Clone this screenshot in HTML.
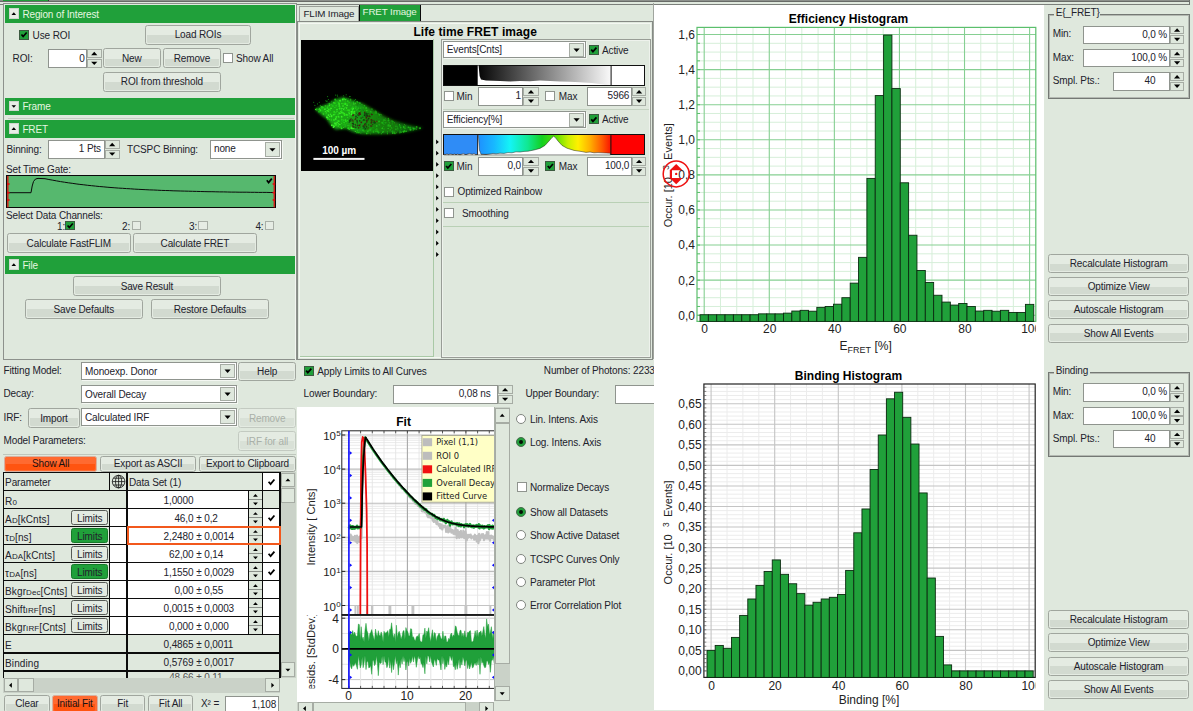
<!DOCTYPE html><html><head><meta charset="utf-8"><title>FRET</title><style>
html,body{margin:0;padding:0;background:#dfe8dd;}
#root{position:relative;width:1193px;height:711px;overflow:hidden;background:#dfe8dd;font:10px "Liberation Sans",sans-serif;letter-spacing:-0.13px;color:#22222c;}
#root div{position:absolute;box-sizing:content-box;white-space:nowrap;}
#root .ov{position:absolute;left:0;top:0;pointer-events:none;letter-spacing:0;}
#root .t{line-height:14px;height:14px;}
#root .btn{box-sizing:border-box;border:1px solid #a0a69e;border-radius:2.6px;background:#e4ebe2;text-align:center;overflow:hidden;}
#root .btn i{position:absolute;left:1.2px;right:1.2px;top:52%;bottom:1.2px;background:#d2dad0;border-radius:0 0 1.5px 1.5px;}
#root .btn span{position:relative;}
#root .btn.dis{color:#a9b0a8;border-color:#c3cac1;}
#root .btn.dis i{background:#d9e1d7;}
#root .btn.org{background:#ff6a30;border-color:#d8b0a0;color:#1a1010;}
#root .btn.org i{background:#ff5410;}
#root .btn.lim{border-color:#555a55;border-radius:2.5px;background:#e3eae1;}
#root .btn.lim i{display:none;}
#root .btn.lim span{top:0.6px;}
#root .btn.grn{background:#20a03a;border-color:#157a28;}
#root .inp{box-sizing:border-box;background:#fff;border:1px solid #8f948e;text-align:right;overflow:hidden;}
#root .cmb{box-sizing:border-box;background:#fff;border:1px solid #8f948e;padding-left:3px;overflow:hidden;box-shadow:1px 1px 0 #f4f7f2;}
#root .sb{box-sizing:border-box;background:#dfe8dd;border:1px solid #a6aca4;}
#root .ck{box-sizing:border-box;background:#fff;border:1px solid #8f948e;}
#root .ckg{box-sizing:border-box;background:#20a03a;border:1px solid #3c5a40;}
#root .rd{box-sizing:border-box;background:#fff;border:1px solid #80857f;border-radius:50%;}
#root .rdo{background:#041004;border-radius:50%;}
#root .cell{overflow:hidden;box-sizing:border-box;}
#root .sub{font-size:8px;position:relative;top:0.5px;}
#root .lbl{overflow:hidden;}
</style></head><body><div id="root"><div class="" style="left:0.00px;top:0.00px;width:1193.00px;height:5.20px;background:#dfe8dd;"></div><div class="" style="left:0.00px;top:0.00px;width:1190.40px;height:0.90px;background:#8c908b;"></div><div class="" style="left:3.00px;top:0.00px;width:45.50px;height:0.90px;background:#20a03a;"></div><div class="" style="left:48.30px;top:0.00px;width:1.00px;height:1.00px;background:#333;"></div><div class="" style="left:0.00px;top:0.80px;width:1190.40px;height:0.90px;background:#686b67;"></div><div class="" style="left:0.00px;top:3.70px;width:1190.40px;height:1.30px;background:#7b7f7a;"></div><div class="" style="left:1189.40px;top:0.00px;width:1.00px;height:5.00px;background:#6e726d;"></div><div class="" style="left:3.00px;top:3.40px;width:294.30px;height:357.00px;border:1.3px solid #8d918c;box-sizing:border-box;background:#dfe8dd;"></div><div class="" style="left:295.20px;top:4.50px;width:1.20px;height:355.00px;background:#f2f5f0;"></div><div class="" style="left:4.60px;top:5.00px;width:290.40px;height:18.00px;background:#20a03a;"></div><div class="" style="left:8.80px;top:8.40px;width:10.00px;height:10.40px;background:#e8ede6;border:1px solid #cfd6cd;box-sizing:border-box;"></div><div class="t" style="left:22.40px;top:7.95px;color:#e6f7e0;">Region of Interest</div><div class="ckg" style="left:19.00px;top:29.60px;width:10.10px;height:10.10px;"></div><div class="t" style="left:32.60px;top:28.55px;">Use ROI</div><div class="btn" style="left:145.00px;top:25.00px;width:105.90px;height:19.80px;line-height:18.80px;"><i></i><span>Load ROIs</span></div><div class="t" style="left:12.60px;top:51.55px;">ROI:</div><div class="inp" style="left:48.20px;top:48.80px;width:38.70px;height:19.20px;line-height:17.2px;padding-right:1.2px;">0</div><div class="sb" style="left:86.90px;top:48.80px;width:14.70px;height:9.20px;"></div><div class="sb" style="left:86.90px;top:58.80px;width:14.70px;height:9.20px;"></div><div class="btn" style="left:102.90px;top:48.30px;width:57.90px;height:20.00px;line-height:19.00px;"><i></i><span>New</span></div><div class="btn" style="left:163.00px;top:48.30px;width:57.90px;height:20.00px;line-height:19.00px;"><i></i><span>Remove</span></div><div class="ck" style="left:222.80px;top:52.60px;width:10.10px;height:10.10px;"></div><div class="t" style="left:236.00px;top:51.55px;">Show All</div><div class="btn" style="left:102.90px;top:71.80px;width:118.00px;height:19.90px;line-height:18.90px;"><i></i><span>ROI from threshold</span></div><div class="" style="left:4.60px;top:97.50px;width:290.40px;height:17.90px;background:#20a03a;"></div><div class="" style="left:8.80px;top:100.90px;width:10.00px;height:10.40px;background:#e8ede6;border:1px solid #cfd6cd;box-sizing:border-box;"></div><div class="t" style="left:22.40px;top:100.40px;color:#e6f7e0;">Frame</div><div class="" style="left:8.00px;top:118.00px;width:286.00px;height:1.00px;background:#c3ccc1;"></div><div class="" style="left:4.60px;top:120.00px;width:290.40px;height:17.80px;background:#20a03a;"></div><div class="" style="left:8.80px;top:123.40px;width:10.00px;height:10.40px;background:#e8ede6;border:1px solid #cfd6cd;box-sizing:border-box;"></div><div class="t" style="left:22.40px;top:122.85px;color:#e6f7e0;">FRET</div><div class="t" style="left:6.50px;top:142.55px;">Binning:</div><div class="inp" style="left:48.20px;top:140.00px;width:56.40px;height:18.60px;line-height:16.6px;padding-right:2.6px;">1 Pts</div><div class="sb" style="left:104.60px;top:140.00px;width:15.20px;height:8.90px;"></div><div class="sb" style="left:104.60px;top:149.70px;width:15.20px;height:8.90px;"></div><div class="t" style="left:127.00px;top:142.55px;">TCSPC Binning:</div><div class="cmb" style="left:210.00px;top:140.30px;width:71.60px;height:18.30px;line-height:15.9px;">none</div><div class="sb" style="left:265.10px;top:141.80px;width:14.70px;height:15.30px;"></div><div class="t" style="left:6.00px;top:162.55px;">Set Time Gate:</div><div class="" style="left:6.30px;top:175.00px;width:269.60px;height:33.40px;background:#56b86e;border:1px solid #0a0a0a;box-sizing:border-box;"></div><div class="t" style="left:6.00px;top:208.55px;">Select Data Channels:</div><div class="t" style="left:57.00px;top:219.55px;">1:</div><div class="ckg" style="left:65.30px;top:220.70px;width:9.80px;height:9.80px;"></div><div class="t" style="left:122.00px;top:219.55px;">2:</div><div class="ck" style="left:131.60px;top:220.70px;width:9.80px;height:9.80px;background:#e6ece4;border-color:#a9afa7;"></div><div class="t" style="left:189.00px;top:219.55px;">3:</div><div class="ck" style="left:198.00px;top:220.70px;width:9.80px;height:9.80px;background:#e6ece4;border-color:#a9afa7;"></div><div class="t" style="left:255.40px;top:219.55px;">4:</div><div class="ck" style="left:264.60px;top:220.70px;width:9.80px;height:9.80px;background:#e6ece4;border-color:#a9afa7;"></div><div class="btn" style="left:6.80px;top:232.90px;width:124.00px;height:20.10px;line-height:19.10px;"><i></i><span>Calculate FastFLIM</span></div><div class="btn" style="left:132.90px;top:232.90px;width:124.20px;height:20.10px;line-height:19.10px;"><i></i><span>Calculate FRET</span></div><div class="" style="left:4.60px;top:256.00px;width:290.40px;height:18.00px;background:#20a03a;"></div><div class="" style="left:8.80px;top:259.40px;width:10.00px;height:10.40px;background:#e8ede6;border:1px solid #cfd6cd;box-sizing:border-box;"></div><div class="t" style="left:22.40px;top:258.95px;color:#e6f7e0;">File</div><div class="btn" style="left:72.90px;top:275.70px;width:148.00px;height:20.30px;line-height:19.30px;"><i></i><span>Save Result</span></div><div class="btn" style="left:24.80px;top:298.70px;width:118.10px;height:20.10px;line-height:19.10px;"><i></i><span>Save Defaults</span></div><div class="btn" style="left:150.90px;top:298.70px;width:117.90px;height:20.10px;line-height:19.10px;"><i></i><span>Restore Defaults</span></div><div class="t" style="left:3.50px;top:363.75px;">Fitting Model:</div><div class="cmb" style="left:81.00px;top:362.00px;width:155.80px;height:17.70px;line-height:17.1px;">Monoexp. Donor</div><div class="sb" style="left:220.30px;top:363.50px;width:14.70px;height:14.70px;"></div><div class="btn" style="left:238.20px;top:361.50px;width:57.90px;height:19.30px;line-height:18.30px;"><i></i><span>Help</span></div><div class="t" style="left:3.50px;top:387.35px;">Decay:</div><div class="cmb" style="left:81.00px;top:385.00px;width:155.80px;height:17.70px;line-height:17.1px;">Overall Decay</div><div class="sb" style="left:220.30px;top:386.50px;width:14.70px;height:14.70px;"></div><div class="t" style="left:3.50px;top:410.55px;">IRF:</div><div class="btn" style="left:28.10px;top:407.50px;width:51.80px;height:20.40px;line-height:19.40px;"><i></i><span>Import</span></div><div class="cmb" style="left:81.00px;top:408.00px;width:155.80px;height:17.70px;line-height:17.1px;">Calculated IRF</div><div class="sb" style="left:220.30px;top:409.50px;width:14.70px;height:14.70px;"></div><div class="btn dis" style="left:238.20px;top:407.50px;width:57.90px;height:20.40px;line-height:19.40px;"><i></i><span>Remove</span></div><div class="t" style="left:3.50px;top:433.65px;">Model Parameters:</div><div class="btn dis" style="left:238.20px;top:431.00px;width:57.90px;height:20.00px;line-height:19.00px;"><i></i><span>IRF for all</span></div><div class="" style="left:3.00px;top:454.30px;width:293.00px;height:1.00px;background:#bfc7bd;"></div><div class="btn org" style="left:4.00px;top:456.30px;width:93.30px;height:15.50px;line-height:14.50px;"><i></i><span>Show All</span></div><div class="btn" style="left:100.00px;top:456.30px;width:96.30px;height:15.50px;line-height:14.50px;"><i></i><span>Export as ASCII</span></div><div class="btn" style="left:199.20px;top:456.30px;width:96.60px;height:15.50px;line-height:14.50px;"><i></i><span>Export to Clipboard</span></div><div class="" style="left:3.10px;top:472.00px;width:277.60px;height:205.80px;background:#0c0c0c;"></div><div class="cell" style="left:4.10px;top:473.30px;width:104.80px;height:16.62px;background:#dfe8dd;line-height:16.6px;padding-left:1px;padding-top:1.6px;">Parameter</div><div class="cell" style="left:110.30px;top:473.30px;width:16.20px;height:16.62px;background:#dfe8dd;line-height:16.6px;"></div><div class="cell" style="left:127.90px;top:473.30px;width:134.00px;height:16.62px;background:#dfe8dd;line-height:16.6px;padding-left:1px;padding-top:1.6px;">Data Set (1)</div><div class="cell" style="left:263.30px;top:473.30px;width:16.20px;height:16.62px;background:#fff;line-height:16.6px;"></div><div class="cell" style="left:4.10px;top:491.32px;width:122.40px;height:16.62px;background:#dfe8dd;line-height:16.6px;padding-left:1px;padding-top:2.4px;letter-spacing:0.1px;">R<span class="sub">0</span></div><div class="cell" style="left:127.90px;top:491.32px;width:119.70px;height:16.62px;background:#fff;line-height:16.6px;padding-top:1.9px;"><span style="position:absolute;right:calc(100% - 65.5px)">1,0000</span></div><div class="cell" style="left:249.00px;top:491.32px;width:12.90px;height:16.62px;background:#dfe8dd;line-height:16.6px;"></div><div class="" style="left:248.90px;top:499.13px;width:13.10px;height:1.00px;background:#8b908a;"></div><div class="cell" style="left:263.30px;top:491.32px;width:16.20px;height:16.62px;background:#dfe8dd;line-height:16.6px;"></div><div class="cell" style="left:4.10px;top:509.34px;width:104.80px;height:16.62px;background:#dfe8dd;line-height:16.6px;padding-left:1px;padding-top:2.4px;letter-spacing:0.1px;">A<span class="sub">D</span>[kCnts]</div><div class="cell" style="left:110.30px;top:509.34px;width:16.20px;height:16.62px;background:#fff;line-height:16.6px;"></div><div class="btn lim" style="left:71.30px;top:510.04px;width:36.90px;height:14.72px;line-height:13.72px;"><i></i><span>Limits</span></div><div class="cell" style="left:127.90px;top:509.34px;width:119.70px;height:16.62px;background:#fff;line-height:16.6px;padding-top:1.9px;"><span style="position:absolute;right:calc(100% - 65.5px)">46,0</span><span style="position:absolute;left:68.3px">± 0,2</span></div><div class="cell" style="left:249.00px;top:509.34px;width:12.90px;height:16.62px;background:#dfe8dd;line-height:16.6px;"></div><div class="" style="left:248.90px;top:517.15px;width:13.10px;height:1.00px;background:#8b908a;"></div><div class="cell" style="left:263.30px;top:509.34px;width:16.20px;height:16.62px;background:#fff;line-height:16.6px;"></div><div class="cell" style="left:4.10px;top:527.36px;width:104.80px;height:16.62px;background:#dfe8dd;line-height:16.6px;padding-left:1px;padding-top:2.4px;letter-spacing:0.1px;">τ<span class="sub">D</span>[ns]</div><div class="cell" style="left:110.30px;top:527.36px;width:16.20px;height:16.62px;background:#fff;line-height:16.6px;"></div><div class="btn lim grn" style="left:71.30px;top:528.06px;width:36.90px;height:14.72px;line-height:13.72px;"><i></i><span>Limits</span></div><div class="cell" style="left:127.90px;top:527.36px;width:119.70px;height:16.62px;background:#fff;line-height:16.6px;padding-top:1.9px;"><span style="position:absolute;right:calc(100% - 65.5px)">2,2480</span><span style="position:absolute;left:68.3px">± 0,0014</span></div><div class="cell" style="left:249.00px;top:527.36px;width:12.90px;height:16.62px;background:#dfe8dd;line-height:16.6px;"></div><div class="" style="left:248.90px;top:535.17px;width:13.10px;height:1.00px;background:#8b908a;"></div><div class="cell" style="left:263.30px;top:527.36px;width:16.20px;height:16.62px;background:#fff;line-height:16.6px;"></div><div class="" style="left:126.90px;top:526.36px;width:153.70px;height:18.82px;border:2px solid #f2581c;box-sizing:border-box;"></div><div class="cell" style="left:4.10px;top:545.38px;width:104.80px;height:16.62px;background:#dfe8dd;line-height:16.6px;padding-left:1px;padding-top:2.4px;letter-spacing:0.1px;">A<span class="sub">DA</span>[kCnts]</div><div class="cell" style="left:110.30px;top:545.38px;width:16.20px;height:16.62px;background:#fff;line-height:16.6px;"></div><div class="btn lim" style="left:71.30px;top:546.08px;width:36.90px;height:14.72px;line-height:13.72px;"><i></i><span>Limits</span></div><div class="cell" style="left:127.90px;top:545.38px;width:119.70px;height:16.62px;background:#fff;line-height:16.6px;padding-top:1.9px;"><span style="position:absolute;right:calc(100% - 65.5px)">62,00</span><span style="position:absolute;left:68.3px">± 0,14</span></div><div class="cell" style="left:249.00px;top:545.38px;width:12.90px;height:16.62px;background:#dfe8dd;line-height:16.6px;"></div><div class="" style="left:248.90px;top:553.19px;width:13.10px;height:1.00px;background:#8b908a;"></div><div class="cell" style="left:263.30px;top:545.38px;width:16.20px;height:16.62px;background:#fff;line-height:16.6px;"></div><div class="cell" style="left:4.10px;top:563.40px;width:104.80px;height:16.62px;background:#dfe8dd;line-height:16.6px;padding-left:1px;padding-top:2.4px;letter-spacing:0.1px;">τ<span class="sub">DA</span>[ns]</div><div class="cell" style="left:110.30px;top:563.40px;width:16.20px;height:16.62px;background:#fff;line-height:16.6px;"></div><div class="btn lim grn" style="left:71.30px;top:564.10px;width:36.90px;height:14.72px;line-height:13.72px;"><i></i><span>Limits</span></div><div class="cell" style="left:127.90px;top:563.40px;width:119.70px;height:16.62px;background:#fff;line-height:16.6px;padding-top:1.9px;"><span style="position:absolute;right:calc(100% - 65.5px)">1,1550</span><span style="position:absolute;left:68.3px">± 0,0029</span></div><div class="cell" style="left:249.00px;top:563.40px;width:12.90px;height:16.62px;background:#dfe8dd;line-height:16.6px;"></div><div class="" style="left:248.90px;top:571.21px;width:13.10px;height:1.00px;background:#8b908a;"></div><div class="cell" style="left:263.30px;top:563.40px;width:16.20px;height:16.62px;background:#fff;line-height:16.6px;"></div><div class="cell" style="left:4.10px;top:581.42px;width:104.80px;height:16.62px;background:#dfe8dd;line-height:16.6px;padding-left:1px;padding-top:2.4px;letter-spacing:0.1px;">Bkgr<span class="sub">Dec</span>[Cnts]</div><div class="cell" style="left:110.30px;top:581.42px;width:16.20px;height:16.62px;background:#fff;line-height:16.6px;"></div><div class="btn lim" style="left:71.30px;top:582.12px;width:36.90px;height:14.72px;line-height:13.72px;"><i></i><span>Limits</span></div><div class="cell" style="left:127.90px;top:581.42px;width:119.70px;height:16.62px;background:#fff;line-height:16.6px;padding-top:1.9px;"><span style="position:absolute;right:calc(100% - 65.5px)">0,00</span><span style="position:absolute;left:68.3px">± 0,55</span></div><div class="cell" style="left:249.00px;top:581.42px;width:12.90px;height:16.62px;background:#dfe8dd;line-height:16.6px;"></div><div class="" style="left:248.90px;top:589.23px;width:13.10px;height:1.00px;background:#8b908a;"></div><div class="cell" style="left:263.30px;top:581.42px;width:16.20px;height:16.62px;background:#fff;line-height:16.6px;"></div><div class="cell" style="left:4.10px;top:599.44px;width:104.80px;height:16.62px;background:#dfe8dd;line-height:16.6px;padding-left:1px;padding-top:2.4px;letter-spacing:0.1px;">Shift<span class="sub">IRF</span>[ns]</div><div class="cell" style="left:110.30px;top:599.44px;width:16.20px;height:16.62px;background:#fff;line-height:16.6px;"></div><div class="btn lim" style="left:71.30px;top:600.14px;width:36.90px;height:14.72px;line-height:13.72px;"><i></i><span>Limits</span></div><div class="cell" style="left:127.90px;top:599.44px;width:119.70px;height:16.62px;background:#fff;line-height:16.6px;padding-top:1.9px;"><span style="position:absolute;right:calc(100% - 65.5px)">0,0015</span><span style="position:absolute;left:68.3px">± 0,0003</span></div><div class="cell" style="left:249.00px;top:599.44px;width:12.90px;height:16.62px;background:#dfe8dd;line-height:16.6px;"></div><div class="" style="left:248.90px;top:607.25px;width:13.10px;height:1.00px;background:#8b908a;"></div><div class="cell" style="left:263.30px;top:599.44px;width:16.20px;height:16.62px;background:#fff;line-height:16.6px;"></div><div class="cell" style="left:4.10px;top:617.46px;width:104.80px;height:16.62px;background:#dfe8dd;line-height:16.6px;padding-left:1px;padding-top:2.4px;letter-spacing:0.1px;">Bkgr<span class="sub">IRF</span>[Cnts]</div><div class="cell" style="left:110.30px;top:617.46px;width:16.20px;height:16.62px;background:#fff;line-height:16.6px;"></div><div class="btn lim" style="left:71.30px;top:618.16px;width:36.90px;height:14.72px;line-height:13.72px;"><i></i><span>Limits</span></div><div class="cell" style="left:127.90px;top:617.46px;width:119.70px;height:16.62px;background:#fff;line-height:16.6px;padding-top:1.9px;"><span style="position:absolute;right:calc(100% - 65.5px)">0,000</span><span style="position:absolute;left:68.3px">± 0,000</span></div><div class="cell" style="left:249.00px;top:617.46px;width:12.90px;height:16.62px;background:#dfe8dd;line-height:16.6px;"></div><div class="" style="left:248.90px;top:625.27px;width:13.10px;height:1.00px;background:#8b908a;"></div><div class="cell" style="left:263.30px;top:617.46px;width:16.20px;height:16.62px;background:#fff;line-height:16.6px;"></div><div class="cell" style="left:4.10px;top:635.48px;width:122.40px;height:16.62px;background:#dfe8dd;line-height:16.6px;padding-left:1px;padding-top:2.4px;letter-spacing:0.1px;">E</div><div class="cell" style="left:127.90px;top:635.48px;width:151.60px;height:16.62px;background:#dfe8dd;line-height:16.6px;padding-top:1.9px;"><span style="position:absolute;right:calc(100% - 65.5px)">0,4865</span><span style="position:absolute;left:68.3px">± 0,0011</span></div><div class="cell" style="left:4.10px;top:653.50px;width:122.40px;height:16.62px;background:#dfe8dd;line-height:16.6px;padding-left:1px;padding-top:2.4px;letter-spacing:0.1px;">Binding</div><div class="cell" style="left:127.90px;top:653.50px;width:151.60px;height:16.62px;background:#dfe8dd;line-height:16.6px;padding-top:1.9px;"><span style="position:absolute;right:calc(100% - 65.5px)">0,5769</span><span style="position:absolute;left:68.3px">± 0,0017</span></div><div class="cell" style="left:4.10px;top:671.52px;width:122.40px;height:6.58px;background:#dfe8dd;line-height:6.6px;"></div><div class="cell" style="left:127.90px;top:671.52px;width:151.60px;height:6.58px;background:#dfe8dd;line-height:6.6px;color:#555;"><span style="position:absolute;top:3px;left:0;right:0"><span style="position:absolute;right:calc(100% - 65.6px)">48,66</span><span style="position:absolute;left:68.4px">± 0,11</span></span></div><div class="" style="left:280.80px;top:472.00px;width:14.80px;height:205.80px;background:#cad2c8;"></div><div class="sb" style="left:280.60px;top:472.80px;width:14.60px;height:14.60px;"></div><div class="sb" style="left:280.60px;top:487.60px;width:14.60px;height:15.60px;"></div><div class="sb" style="left:280.60px;top:661.80px;width:14.60px;height:15.60px;"></div><div class="" style="left:3.40px;top:677.80px;width:277.00px;height:15.00px;background:#cad2c8;"></div><div class="sb" style="left:3.60px;top:678.00px;width:14.60px;height:14.40px;"></div><div class="sb" style="left:18.40px;top:678.00px;width:15.60px;height:14.40px;"></div><div class="sb" style="left:264.80px;top:678.00px;width:15.00px;height:14.40px;"></div><div class="" style="left:280.20px;top:677.80px;width:15.40px;height:15.00px;background:#dfe8dd;"></div><div class="btn" style="left:4.10px;top:695.00px;width:45.60px;height:17.80px;line-height:16.80px;"><i></i><span>Clear</span></div><div class="btn org" style="left:52.20px;top:695.00px;width:45.40px;height:17.80px;line-height:16.80px;"><i></i><span>Initial Fit</span></div><div class="btn" style="left:100.10px;top:695.00px;width:45.20px;height:17.80px;line-height:16.80px;"><i></i><span>Fit</span></div><div class="btn" style="left:148.20px;top:695.00px;width:44.80px;height:17.80px;line-height:16.80px;"><i></i><span>Fit All</span></div><div class="t" style="left:201.00px;top:697.35px;">X² =</div><div class="inp" style="left:224.60px;top:696.00px;width:54.60px;height:18.00px;line-height:15px;padding-right:2px;">1,108</div><div class="" style="left:296.50px;top:704.00px;width:1.20px;height:8.00px;background:#8d918c;"></div><div class="tab" style="left:299.30px;top:5.60px;width:59.30px;height:16.00px;background:#dfe8dd;border:1px solid #9aa098;border-bottom:none;box-sizing:border-box;line-height:13px;text-align:center;font-size:9.8px;">FLIM Image</div><div class="tab" style="left:358.60px;top:4.80px;width:62.00px;height:17.00px;background:#20a03a;border:1.2px solid #0a0a0a;border-top:none;border-bottom:none;box-sizing:border-box;line-height:14.6px;text-align:center;color:#e6f7e0;font-size:9.8px;">FRET Image</div><div class="" style="left:297.20px;top:21.20px;width:355.60px;height:338.60px;border:1.4px solid #868a85;box-sizing:border-box;background:#dfe8dd;"></div><div class="" style="left:298.60px;top:22.60px;width:352.80px;height:335.80px;border:1px solid #f4f7f2;box-sizing:border-box;"></div><div class="tt" style="left:300.20px;top:25.00px;width:350.00px;height:15.00px;text-align:center;font-weight:bold;font-size:12px;line-height:15px;color:#000;letter-spacing:0.08px;">Life time FRET image</div><div class="" style="left:300.00px;top:39.40px;width:133.60px;height:318.00px;border-right:1px solid #a9c9a6;border-bottom:1px solid #a9c9a6;box-sizing:border-box;"></div><div class="" style="left:300.60px;top:39.90px;width:132.00px;height:131.50px;background:#000;"></div><div class="" style="left:441.20px;top:39.20px;width:209.60px;height:318.40px;border:1px solid #989d96;box-sizing:border-box;"></div><div class="" style="left:442.20px;top:40.20px;width:207.60px;height:316.40px;border:1px solid #eef2ec;box-sizing:border-box;"></div><div class="cmb" style="left:442.80px;top:41.30px;width:143.00px;height:16.90px;line-height:16.3px;">Events[Cnts]</div><div class="sb" style="left:569.30px;top:42.80px;width:14.70px;height:13.90px;"></div><div class="ckg" style="left:588.80px;top:44.70px;width:10.10px;height:10.10px;"></div><div class="t" style="left:602.00px;top:43.65px;">Active</div><div class="" style="left:443.40px;top:64.60px;width:201.60px;height:21.20px;background:linear-gradient(to right,#000 0,#000 34.1px,#050505 34.2px,#fafafa 167.4px,#fff 167.5px);border:1px solid #111;box-sizing:border-box;"></div><div class="ck" style="left:443.70px;top:91.20px;width:10.10px;height:10.10px;"></div><div class="t" style="left:456.60px;top:90.15px;">Min</div><div class="inp" style="left:478.30px;top:87.20px;width:45.10px;height:18.50px;line-height:16.5px;padding-right:1.4px;">1</div><div class="sb" style="left:523.40px;top:87.20px;width:15.20px;height:8.85px;"></div><div class="sb" style="left:523.40px;top:96.85px;width:15.20px;height:8.85px;"></div><div class="ck" style="left:545.30px;top:91.20px;width:10.10px;height:10.10px;"></div><div class="t" style="left:558.80px;top:90.15px;">Max</div><div class="inp" style="left:586.60px;top:87.20px;width:45.10px;height:18.50px;line-height:16.5px;padding-right:1.4px;">5966</div><div class="sb" style="left:631.70px;top:87.20px;width:14.80px;height:8.85px;"></div><div class="sb" style="left:631.70px;top:96.85px;width:14.80px;height:8.85px;"></div><div class="" style="left:443.00px;top:109.10px;width:206.00px;height:1.00px;background:#c5d3c2;"></div><div class="cmb" style="left:442.80px;top:111.00px;width:143.00px;height:17.00px;line-height:16.4px;">Efficiency[%]</div><div class="sb" style="left:569.30px;top:112.50px;width:14.70px;height:14.00px;"></div><div class="ckg" style="left:588.80px;top:114.40px;width:10.10px;height:10.10px;"></div><div class="t" style="left:602.00px;top:113.35px;">Active</div><div class="" style="left:443.40px;top:134.40px;width:201.60px;height:21.00px;background:linear-gradient(to right,#2f8cf6 0,#2f8cf6 34.1px,#1e90ff 34.2px,#18b8ff 50px,#14f4f6 66px,#10e890 84px,#12d020 98px,#5ce000 112px,#c8f000 124px,#fff000 134px,#ffb000 146px,#ff5a00 158px,#fa1400 166.8px,#ff0000 167px);border:1px solid #111;box-sizing:border-box;"></div><div class="ckg" style="left:443.70px;top:161.00px;width:10.10px;height:10.10px;"></div><div class="t" style="left:456.60px;top:159.95px;">Min</div><div class="inp" style="left:478.30px;top:156.80px;width:45.10px;height:18.80px;line-height:16.8px;padding-right:1.4px;">0,0</div><div class="sb" style="left:523.40px;top:156.80px;width:15.20px;height:9.00px;"></div><div class="sb" style="left:523.40px;top:166.60px;width:15.20px;height:9.00px;"></div><div class="ckg" style="left:545.30px;top:161.00px;width:10.10px;height:10.10px;"></div><div class="t" style="left:558.80px;top:159.95px;">Max</div><div class="inp" style="left:586.60px;top:156.80px;width:45.10px;height:18.80px;line-height:16.8px;padding-right:1.4px;">100,0</div><div class="sb" style="left:631.70px;top:156.80px;width:14.80px;height:9.00px;"></div><div class="sb" style="left:631.70px;top:166.60px;width:14.80px;height:9.00px;"></div><div class="ck" style="left:444.00px;top:186.50px;width:10.30px;height:10.30px;"></div><div class="t" style="left:457.50px;top:185.45px;">Optimized Rainbow</div><div class="" style="left:443.00px;top:202.20px;width:206.00px;height:1.00px;background:#b9d0b5;"></div><div class="ck" style="left:444.00px;top:207.80px;width:10.30px;height:10.30px;"></div><div class="t" style="left:462.00px;top:206.95px;">Smoothing</div><div class="" style="left:443.00px;top:225.80px;width:206.00px;height:1.00px;background:#b9d0b5;"></div><div class="ckg" style="left:303.60px;top:365.60px;width:10.30px;height:10.30px;"></div><div class="t" style="left:317.30px;top:364.75px;">Apply Limits to All Curves</div><div class="t" style="left:543.80px;top:364.15px;width:110.6px;overflow:hidden;white-space:nowrap;">Number of Photons: 2233</div><div class="t" style="left:303.60px;top:386.95px;">Lower Boundary:</div><div class="inp" style="left:392.90px;top:385.10px;width:104.70px;height:18.80px;line-height:16.8px;padding-right:6px;">0,08 ns</div><div class="sb" style="left:497.60px;top:385.10px;width:15.00px;height:9.00px;"></div><div class="sb" style="left:497.60px;top:394.90px;width:15.00px;height:9.00px;"></div><div class="t" style="left:525.40px;top:386.95px;">Upper Boundary:</div><div class="inp" style="left:614.80px;top:385.10px;width:39.00px;height:18.80px;border-right:none;"></div><div class="rd" style="left:516.40px;top:413.80px;width:10.00px;height:10.00px;"></div><div class="t" style="left:530.00px;top:412.85px;">Lin. Intens. Axis</div><div class="rd" style="left:516.40px;top:437.00px;width:10.00px;height:10.00px;background:#20a03a;border-color:#4a6a4e;"></div><div class="rdo" style="left:519.30px;top:439.90px;width:4.20px;height:4.20px;"></div><div class="t" style="left:530.00px;top:436.05px;">Log. Intens. Axis</div><div class="ck" style="left:516.50px;top:481.80px;width:10.20px;height:10.20px;"></div><div class="t" style="left:530.00px;top:480.75px;">Normalize Decays</div><div class="rd" style="left:516.40px;top:506.80px;width:10.00px;height:10.00px;background:#20a03a;border-color:#4a6a4e;"></div><div class="rdo" style="left:519.30px;top:509.70px;width:4.20px;height:4.20px;"></div><div class="t" style="left:530.00px;top:505.85px;">Show all Datasets</div><div class="rd" style="left:516.40px;top:530.20px;width:10.00px;height:10.00px;"></div><div class="t" style="left:530.00px;top:529.25px;">Show Active Dataset</div><div class="rd" style="left:516.40px;top:553.50px;width:10.00px;height:10.00px;"></div><div class="t" style="left:530.00px;top:552.55px;">TCSPC Curves Only</div><div class="rd" style="left:516.40px;top:576.70px;width:10.00px;height:10.00px;"></div><div class="t" style="left:530.00px;top:575.75px;">Parameter Plot</div><div class="rd" style="left:516.40px;top:600.00px;width:10.00px;height:10.00px;"></div><div class="t" style="left:530.00px;top:599.05px;">Error Correlation Plot</div><div class="" style="left:297.40px;top:407.40px;width:197.00px;height:294.20px;background:#fff;"></div><svg class="ov" width="1193" height="711" viewBox="0 0 1193 711"><text x="403.6" y="426.2" text-anchor="middle" font-family="Liberation Sans, sans-serif" font-size="12" font-weight="bold" fill="#000">Fit</text><clipPath id="cpm"><rect x="341.8" y="430.8" width="152.4" height="184"/></clipPath><clipPath id="cpr"><rect x="341.8" y="615" width="152.4" height="73.4"/></clipPath><g clip-path="url(#cpm)"><line x1="341.8" x2="494.2" y1="595.23" y2="595.23" stroke="#e9e9e9" stroke-width="0.9"/><line x1="341.8" x2="494.2" y1="589.23" y2="589.23" stroke="#e9e9e9" stroke-width="0.9"/><line x1="341.8" x2="494.2" y1="584.97" y2="584.97" stroke="#e9e9e9" stroke-width="0.9"/><line x1="341.8" x2="494.2" y1="581.67" y2="581.67" stroke="#e9e9e9" stroke-width="0.9"/><line x1="341.8" x2="494.2" y1="578.97" y2="578.97" stroke="#e9e9e9" stroke-width="0.9"/><line x1="341.8" x2="494.2" y1="576.68" y2="576.68" stroke="#e9e9e9" stroke-width="0.9"/><line x1="341.8" x2="494.2" y1="574.70" y2="574.70" stroke="#e9e9e9" stroke-width="0.9"/><line x1="341.8" x2="494.2" y1="572.96" y2="572.96" stroke="#e9e9e9" stroke-width="0.9"/><line x1="341.8" x2="494.2" y1="561.13" y2="561.13" stroke="#e9e9e9" stroke-width="0.9"/><line x1="341.8" x2="494.2" y1="555.13" y2="555.13" stroke="#e9e9e9" stroke-width="0.9"/><line x1="341.8" x2="494.2" y1="550.87" y2="550.87" stroke="#e9e9e9" stroke-width="0.9"/><line x1="341.8" x2="494.2" y1="547.57" y2="547.57" stroke="#e9e9e9" stroke-width="0.9"/><line x1="341.8" x2="494.2" y1="544.87" y2="544.87" stroke="#e9e9e9" stroke-width="0.9"/><line x1="341.8" x2="494.2" y1="542.58" y2="542.58" stroke="#e9e9e9" stroke-width="0.9"/><line x1="341.8" x2="494.2" y1="540.60" y2="540.60" stroke="#e9e9e9" stroke-width="0.9"/><line x1="341.8" x2="494.2" y1="538.86" y2="538.86" stroke="#e9e9e9" stroke-width="0.9"/><line x1="341.8" x2="494.2" y1="527.03" y2="527.03" stroke="#e9e9e9" stroke-width="0.9"/><line x1="341.8" x2="494.2" y1="521.03" y2="521.03" stroke="#e9e9e9" stroke-width="0.9"/><line x1="341.8" x2="494.2" y1="516.77" y2="516.77" stroke="#e9e9e9" stroke-width="0.9"/><line x1="341.8" x2="494.2" y1="513.47" y2="513.47" stroke="#e9e9e9" stroke-width="0.9"/><line x1="341.8" x2="494.2" y1="510.77" y2="510.77" stroke="#e9e9e9" stroke-width="0.9"/><line x1="341.8" x2="494.2" y1="508.48" y2="508.48" stroke="#e9e9e9" stroke-width="0.9"/><line x1="341.8" x2="494.2" y1="506.50" y2="506.50" stroke="#e9e9e9" stroke-width="0.9"/><line x1="341.8" x2="494.2" y1="504.76" y2="504.76" stroke="#e9e9e9" stroke-width="0.9"/><line x1="341.8" x2="494.2" y1="492.93" y2="492.93" stroke="#e9e9e9" stroke-width="0.9"/><line x1="341.8" x2="494.2" y1="486.93" y2="486.93" stroke="#e9e9e9" stroke-width="0.9"/><line x1="341.8" x2="494.2" y1="482.67" y2="482.67" stroke="#e9e9e9" stroke-width="0.9"/><line x1="341.8" x2="494.2" y1="479.37" y2="479.37" stroke="#e9e9e9" stroke-width="0.9"/><line x1="341.8" x2="494.2" y1="476.67" y2="476.67" stroke="#e9e9e9" stroke-width="0.9"/><line x1="341.8" x2="494.2" y1="474.38" y2="474.38" stroke="#e9e9e9" stroke-width="0.9"/><line x1="341.8" x2="494.2" y1="472.40" y2="472.40" stroke="#e9e9e9" stroke-width="0.9"/><line x1="341.8" x2="494.2" y1="470.66" y2="470.66" stroke="#e9e9e9" stroke-width="0.9"/><line x1="341.8" x2="494.2" y1="458.83" y2="458.83" stroke="#e9e9e9" stroke-width="0.9"/><line x1="341.8" x2="494.2" y1="452.83" y2="452.83" stroke="#e9e9e9" stroke-width="0.9"/><line x1="341.8" x2="494.2" y1="448.57" y2="448.57" stroke="#e9e9e9" stroke-width="0.9"/><line x1="341.8" x2="494.2" y1="445.27" y2="445.27" stroke="#e9e9e9" stroke-width="0.9"/><line x1="341.8" x2="494.2" y1="442.57" y2="442.57" stroke="#e9e9e9" stroke-width="0.9"/><line x1="341.8" x2="494.2" y1="440.28" y2="440.28" stroke="#e9e9e9" stroke-width="0.9"/><line x1="341.8" x2="494.2" y1="438.30" y2="438.30" stroke="#e9e9e9" stroke-width="0.9"/><line x1="341.8" x2="494.2" y1="436.56" y2="436.56" stroke="#e9e9e9" stroke-width="0.9"/><line y1="430.8" y2="614.8" x1="360.60" x2="360.60" stroke="#e4e4e4" stroke-width="0.9"/><line y1="430.8" y2="614.8" x1="372.30" x2="372.30" stroke="#e4e4e4" stroke-width="0.9"/><line y1="430.8" y2="614.8" x1="384.00" x2="384.00" stroke="#e4e4e4" stroke-width="0.9"/><line y1="430.8" y2="614.8" x1="395.70" x2="395.70" stroke="#e4e4e4" stroke-width="0.9"/><line y1="430.8" y2="614.8" x1="419.10" x2="419.10" stroke="#e4e4e4" stroke-width="0.9"/><line y1="430.8" y2="614.8" x1="430.80" x2="430.80" stroke="#e4e4e4" stroke-width="0.9"/><line y1="430.8" y2="614.8" x1="442.50" x2="442.50" stroke="#e4e4e4" stroke-width="0.9"/><line y1="430.8" y2="614.8" x1="454.20" x2="454.20" stroke="#e4e4e4" stroke-width="0.9"/><line y1="430.8" y2="614.8" x1="477.60" x2="477.60" stroke="#e4e4e4" stroke-width="0.9"/><line y1="430.8" y2="614.8" x1="489.30" x2="489.30" stroke="#e4e4e4" stroke-width="0.9"/><line y1="430.8" y2="614.8" x1="501.00" x2="501.00" stroke="#e4e4e4" stroke-width="0.9"/><line x1="341.8" x2="494.2" y1="605.50" y2="605.50" stroke="#bdbdbd" stroke-width="1.1"/><line x1="341.8" x2="494.2" y1="571.40" y2="571.40" stroke="#bdbdbd" stroke-width="1.1"/><line x1="341.8" x2="494.2" y1="537.30" y2="537.30" stroke="#bdbdbd" stroke-width="1.1"/><line x1="341.8" x2="494.2" y1="503.20" y2="503.20" stroke="#bdbdbd" stroke-width="1.1"/><line x1="341.8" x2="494.2" y1="469.10" y2="469.10" stroke="#bdbdbd" stroke-width="1.1"/><line x1="341.8" x2="494.2" y1="435.00" y2="435.00" stroke="#bdbdbd" stroke-width="1.1"/><line y1="430.8" y2="614.8" x1="407.40" x2="407.40" stroke="#a8a8a8" stroke-width="1.1"/><line y1="430.8" y2="614.8" x1="465.90" x2="465.90" stroke="#a8a8a8" stroke-width="1.1"/><polyline points="341.8,605.5 355.0,605.5 355.0,616.8 355.8,616.8 355.8,605.5 357.5,605.5 357.5,616.8 358.3,616.8 358.3,605.5 366.5,605.5 366.5,616.8 367.3,616.8 367.3,605.5 371.5,605.5 371.5,616.8 372.3,616.8 372.3,605.5 372.0,605.5 372.0,616.8 372.8,616.8 372.8,605.5 389.0,605.5 389.0,616.8 389.8,616.8 389.8,605.5 390.0,605.5 390.0,616.8 390.8,616.8 390.8,605.5 412.0,605.5 412.0,616.8 412.8,616.8 412.8,605.5 413.0,605.5 413.0,616.8 413.8,616.8 413.8,605.5 465.0,605.5 465.0,616.8 465.8,616.8 465.8,605.5 466.0,605.5 466.0,616.8 466.8,616.8 466.8,605.5 490.0,605.5 490.0,616.8 490.8,616.8 490.8,605.5 494.2,605.5" fill="none" stroke="#c4c4c4" stroke-width="1.1"/><polyline points="348.9,537.4 349.3,539.9 349.6,537.8 350.0,537.6 350.3,540.0 350.7,534.7 351.0,537.3 351.4,535.9 351.7,539.9 352.1,540.2 352.4,539.3 352.8,538.7 353.1,537.1 353.5,538.0 353.8,539.5 354.2,540.6 354.5,539.7 354.9,535.8 355.2,540.3 355.6,538.0 355.9,537.6 356.3,541.8 356.6,538.4 357.0,535.6 357.3,543.0 357.7,539.2 358.0,538.7 358.4,540.3 358.7,537.4 359.1,538.6 359.4,541.8 359.8,536.7 360.1,537.0 360.5,536.4 360.8,535.3 361.2,537.7 361.5,538.2 361.9,519.3 362.2,495.2 362.6,482.1 362.9,472.3 363.3,464.9 363.6,458.8 364.0,453.5 364.3,448.9 364.7,445.3 365.0,441.8 365.4,438.5 365.7,437.8 366.1,438.4 366.4,439.2 366.8,439.8 367.2,440.2 367.5,440.8 367.9,441.4 368.2,441.8 368.6,442.4 368.9,443.0 369.3,443.6 369.6,444.1 370.0,444.6 370.3,445.2 370.7,445.8 371.0,446.3 371.4,447.1 371.7,447.3 372.1,447.9 372.4,448.5 372.8,449.3 373.1,449.7 373.5,450.1 373.8,450.9 374.2,451.2 374.5,451.6 374.9,452.4 375.2,452.6 375.6,453.2 375.9,453.8 376.3,454.3 376.6,454.8 377.0,455.4 377.3,455.7 377.7,456.5 378.0,457.0 378.4,457.2 378.7,457.9 379.1,458.5 379.4,458.7 379.8,459.2 380.1,460.0 380.5,460.6 380.8,460.9 381.2,461.4 381.5,461.9 381.9,462.1 382.2,463.0 382.6,463.1 382.9,464.0 383.3,464.4 383.6,464.6 384.0,465.0 384.4,465.5 384.7,466.1 385.1,466.6 385.4,467.0 385.8,467.4 386.1,468.0 386.5,468.4 386.8,468.8 387.2,469.4 387.5,469.7 387.9,470.2 388.2,470.3 388.6,471.1 388.9,471.8 389.3,472.2 389.6,472.6 390.0,472.8 390.3,473.5 390.7,473.8 391.0,473.8 391.4,475.5 391.7,475.5 392.1,475.6 392.4,476.0 392.8,476.5 393.1,477.1 393.5,477.2 393.8,477.7 394.2,478.4 394.5,477.9 394.9,479.0 395.2,479.7 395.6,480.0 395.9,480.5 396.3,480.9 396.6,482.2 397.0,481.8 397.3,481.8 397.7,482.9 398.0,483.0 398.4,483.0 398.7,483.5 399.1,483.6 399.4,485.2 399.8,485.2 400.1,485.6 400.5,485.6 400.8,485.8 401.2,487.8 401.5,486.6 401.9,488.1 402.3,487.6 402.6,488.9 403.0,488.6 403.3,488.6 403.7,489.6 404.0,489.8 404.4,490.0 404.7,490.7 405.1,491.2 405.4,490.8 405.8,491.4 406.1,492.5 406.5,491.4 406.8,493.7 407.2,493.0 407.5,494.0 407.9,494.2 408.2,494.3 408.6,495.0 408.9,495.1 409.3,496.7 409.6,497.1 410.0,496.3 410.3,497.6 410.7,498.0 411.0,498.6 411.4,497.4 411.7,498.1 412.1,498.0 412.4,499.9 412.8,499.7 413.1,500.8 413.5,499.9 413.8,499.8 414.2,501.8 414.5,500.5 414.9,501.3 415.2,502.4 415.6,504.0 415.9,502.1 416.3,503.5 416.6,504.2 417.0,503.9 417.3,504.2 417.7,503.8 418.0,506.0 418.4,504.7 418.7,504.8 419.1,505.2 419.5,506.8 419.8,507.6 420.2,506.6 420.5,507.6 420.9,508.0 421.2,507.2 421.6,509.0 421.9,511.1 422.3,509.8 422.6,511.4 423.0,509.4 423.3,510.2 423.7,511.4 424.0,511.2 424.4,510.7 424.7,511.8 425.1,510.9 425.4,512.6 425.8,511.8 426.1,511.7 426.5,511.9 426.8,514.5 427.2,513.3 427.5,516.4 427.9,515.9 428.2,517.2 428.6,514.3 428.9,517.1 429.3,516.1 429.6,516.6 430.0,516.7 430.3,517.6 430.7,517.0 431.0,515.5 431.4,517.8 431.7,517.6 432.1,517.3 432.4,519.0 432.8,520.6 433.1,520.0 433.5,518.3 433.8,522.0 434.2,521.0 434.5,519.2 434.9,519.8 435.2,521.0 435.6,520.3 435.9,521.4 436.3,523.4 436.6,524.2 437.0,523.3 437.4,521.4 437.7,523.7 438.1,524.4 438.4,524.5 438.8,525.8 439.1,524.1 439.5,525.9 439.8,523.9 440.2,528.1 440.5,524.4 440.9,526.1 441.2,528.3 441.6,524.5 441.9,526.3 442.3,529.5 442.6,527.6 443.0,526.1 443.3,527.5 443.7,525.7 444.0,526.0 444.4,526.3 444.7,527.1 445.1,525.6 445.4,526.9 445.8,527.5 446.1,531.8 446.5,527.1 446.8,526.6 447.2,529.5 447.5,530.0 447.9,526.0 448.2,532.5 448.6,528.9 448.9,525.7 449.3,531.7 449.6,529.0 450.0,527.1 450.3,530.8 450.7,529.7 451.0,529.3 451.4,532.7 451.7,531.4 452.1,530.8 452.4,530.0 452.8,531.7 453.1,532.2 453.5,533.8 453.8,532.7 454.2,530.5 454.6,532.2 454.9,534.1 455.3,534.2 455.6,527.7 456.0,530.7 456.3,531.8 456.7,538.1 457.0,532.0 457.4,532.4 457.7,530.2 458.1,532.7 458.4,533.8 458.8,532.8 459.1,537.8 459.5,532.0 459.8,533.5 460.2,535.6 460.5,531.7 460.9,530.8 461.2,537.3 461.6,536.0 461.9,534.1 462.3,534.4 462.6,535.7 463.0,537.0 463.3,530.7 463.7,533.0 464.0,537.7 464.4,538.1 464.7,531.8 465.1,533.4 465.4,531.7 465.8,533.9 466.1,537.5 466.5,535.2 466.8,540.3 467.2,537.4 467.5,536.0 467.9,534.9 468.2,537.6 468.6,536.4 468.9,535.2 469.3,535.4 469.6,534.9 470.0,535.9 470.3,537.1 470.7,534.7 471.0,536.4 471.4,538.3 471.8,537.9 472.1,536.6 472.5,536.9 472.8,536.4 473.2,536.8 473.5,536.4 473.9,537.1 474.2,539.6 474.6,536.0 474.9,534.7 475.3,536.1 475.6,537.5 476.0,536.1 476.3,539.3 476.7,541.3 477.0,537.1 477.4,539.3 477.7,535.6 478.1,539.7 478.4,543.2 478.8,539.7 479.1,533.9 479.5,538.3 479.8,540.5 480.2,539.2 480.5,536.3 480.9,536.4 481.2,537.1 481.6,534.3 481.9,536.0 482.3,537.7 482.6,536.3 483.0,534.0 483.3,535.5 483.7,535.4 484.0,540.1 484.4,538.1 484.7,536.1 485.1,538.4 485.4,535.4 485.8,536.5 486.1,535.8 486.5,538.3 486.8,532.2 487.2,535.1 487.5,538.4 487.9,537.7 488.2,532.2 488.6,538.7 488.9,536.0 489.3,535.8 489.7,538.0 490.0,540.6 490.4,537.6 490.7,537.2 491.1,535.5 491.4,536.3 491.8,538.0 492.1,536.2 492.5,536.9 492.8,537.6 493.2,538.0 493.5,538.7 493.9,536.6 494.2,540.5 494.6,539.5 494.9,538.1 495.3,541.4 495.6,539.1 496.0,542.6 496.3,539.7" fill="none" stroke="#c0c0c0" stroke-width="2.2" stroke-linejoin="round"/><polyline points="348.3,526.5 348.7,526.5 349.0,527.1 349.4,527.2 349.7,528.3 350.1,525.4 350.4,526.6 350.8,526.1 351.1,527.8 351.5,527.2 351.8,528.7 352.2,526.3 352.5,526.2 352.9,528.7 353.2,527.1 353.6,526.5 353.9,528.6 354.3,528.7 354.6,528.0 355.0,527.6 355.3,528.3 355.7,527.0 356.0,526.8 356.4,526.5 356.7,526.4 357.1,525.7 357.4,526.0 357.8,528.2 358.1,527.5 358.5,528.0 358.8,528.0 359.2,527.1 359.5,527.0 359.9,526.6 360.2,528.4 360.6,528.1 360.9,527.1 361.3,513.9 361.6,494.3 362.0,481.1 362.3,471.6 362.7,464.1 363.0,458.0 363.4,453.0 363.7,448.6 364.1,444.7 364.4,441.3 364.8,438.1 365.1,437.4 365.5,438.1 365.8,438.6 366.2,439.1 366.6,439.8 366.9,440.3 367.3,440.9 367.6,441.4 368.0,442.0 368.3,442.6 368.7,443.2 369.0,443.7 369.4,444.2 369.7,444.8 370.1,445.3 370.4,445.9 370.8,446.5 371.1,447.0 371.5,447.6 371.8,448.1 372.2,448.6 372.5,449.2 372.9,449.7 373.2,450.2 373.6,450.8 373.9,451.1 374.3,451.8 374.6,452.2 375.0,452.8 375.3,453.2 375.7,454.0 376.0,454.4 376.4,454.8 376.7,455.3 377.1,455.7 377.4,456.4 377.8,456.8 378.1,457.3 378.5,457.8 378.8,458.3 379.2,458.9 379.5,459.3 379.9,459.9 380.2,460.2 380.6,460.9 380.9,461.3 381.3,461.6 381.6,462.3 382.0,462.7 382.3,463.1 382.7,463.7 383.0,464.2 383.4,464.6 383.8,465.0 384.1,465.5 384.5,466.1 384.8,466.3 385.2,466.8 385.5,467.4 385.9,467.8 386.2,468.4 386.6,468.6 386.9,469.3 387.3,469.6 387.6,470.2 388.0,470.7 388.3,470.9 388.7,471.3 389.0,471.9 389.4,472.4 389.7,472.7 390.1,473.2 390.4,473.6 390.8,473.9 391.1,474.4 391.5,475.0 391.8,475.0 392.2,475.8 392.5,476.1 392.9,476.8 393.2,477.1 393.6,477.8 393.9,477.7 394.3,478.1 394.6,479.0 395.0,479.5 395.3,479.9 395.7,479.8 396.0,480.5 396.4,480.9 396.7,481.3 397.1,481.7 397.4,482.3 397.8,482.5 398.1,483.2 398.5,483.3 398.8,483.7 399.2,484.0 399.5,484.6 399.9,485.1 400.2,485.3 400.6,485.8 400.9,485.8 401.3,486.4 401.7,486.9 402.0,487.4 402.4,487.9 402.7,488.3 403.1,488.6 403.4,488.8 403.8,489.1 404.1,489.5 404.5,489.5 404.8,490.6 405.2,490.8 405.5,490.4 405.9,492.0 406.2,492.1 406.6,492.2 406.9,492.6 407.3,492.9 407.6,493.5 408.0,493.7 408.3,494.1 408.7,494.3 409.0,495.4 409.4,495.5 409.7,495.6 410.1,496.3 410.4,496.6 410.8,496.5 411.1,497.2 411.5,497.2 411.8,497.5 412.2,498.0 412.5,498.3 412.9,498.8 413.2,499.6 413.6,499.5 413.9,499.7 414.3,500.4 414.6,500.5 415.0,500.6 415.3,501.5 415.7,501.3 416.0,501.1 416.4,502.4 416.7,502.4 417.1,502.9 417.4,502.5 417.8,503.3 418.1,503.4 418.5,504.4 418.9,504.4 419.2,504.7 419.6,505.8 419.9,504.7 420.3,505.3 420.6,506.7 421.0,506.0 421.3,506.6 421.7,506.7 422.0,507.0 422.4,508.2 422.7,507.9 423.1,507.4 423.4,508.6 423.8,509.1 424.1,509.6 424.5,509.8 424.8,509.3 425.2,508.9 425.5,509.8 425.9,510.2 426.2,509.4 426.6,511.1 426.9,511.5 427.3,511.1 427.6,511.3 428.0,512.4 428.3,512.8 428.7,512.2 429.0,512.5 429.4,513.6 429.7,513.2 430.1,513.7 430.4,513.4 430.8,513.9 431.1,514.1 431.5,514.5 431.8,513.9 432.2,513.9 432.5,515.2 432.9,514.7 433.2,515.9 433.6,515.6 433.9,515.4 434.3,515.1 434.6,516.5 435.0,516.5 435.3,516.6 435.7,517.8 436.0,517.1 436.4,517.7 436.8,517.2 437.1,518.4 437.5,519.1 437.8,518.0 438.2,518.0 438.5,518.7 438.9,517.9 439.2,518.9 439.6,519.3 439.9,518.7 440.3,520.3 440.6,519.8 441.0,519.5 441.3,519.1 441.7,520.0 442.0,519.8 442.4,520.6 442.7,520.1 443.1,519.3 443.4,521.1 443.8,519.0 444.1,521.3 444.5,521.0 444.8,521.0 445.2,520.5 445.5,522.3 445.9,523.1 446.2,521.2 446.6,521.2 446.9,521.4 447.3,520.0 447.6,521.9 448.0,522.0 448.3,521.6 448.7,522.1 449.0,521.3 449.4,523.6 449.7,523.0 450.1,525.5 450.4,522.3 450.8,523.3 451.1,522.4 451.5,521.5 451.8,523.3 452.2,523.6 452.5,523.9 452.9,524.2 453.2,524.1 453.6,523.2 454.0,523.8 454.3,523.8 454.7,524.1 455.0,523.3 455.4,523.7 455.7,524.3 456.1,523.7 456.4,524.4 456.8,525.3 457.1,523.2 457.5,524.1 457.8,525.3 458.2,523.7 458.5,524.4 458.9,526.0 459.2,523.5 459.6,524.6 459.9,524.2 460.3,524.8 460.6,525.1 461.0,526.3 461.3,524.3 461.7,525.1 462.0,525.4 462.4,524.9 462.7,525.2 463.1,524.8 463.4,525.7 463.8,525.4 464.1,527.3 464.5,525.8 464.8,525.0 465.2,524.4 465.5,525.9 465.9,525.7 466.2,524.3 466.6,526.0 466.9,525.1 467.3,524.3 467.6,525.8 468.0,524.8 468.3,526.5 468.7,525.7 469.0,526.0 469.4,525.9 469.7,525.0 470.1,524.0 470.4,526.6 470.8,526.6 471.1,525.7 471.5,527.0 471.9,525.7 472.2,525.7 472.6,526.4 472.9,525.7 473.3,527.6 473.6,525.6 474.0,527.6 474.3,526.9 474.7,526.8 475.0,526.7 475.4,525.6 475.7,526.3 476.1,526.7 476.4,525.9 476.8,525.0 477.1,526.4 477.5,526.1 477.8,525.4 478.2,526.2 478.5,527.6 478.9,524.3 479.2,524.6 479.6,528.3 479.9,526.6 480.3,526.2 480.6,525.7 481.0,526.0 481.3,526.8 481.7,527.5 482.0,526.5 482.4,525.7 482.7,527.6 483.1,527.5 483.4,526.7 483.8,528.4 484.1,526.9 484.5,527.1 484.8,526.3 485.2,527.3 485.5,527.5 485.9,527.1 486.2,526.8 486.6,527.3 486.9,526.7 487.3,526.1 487.6,525.7 488.0,525.3 488.3,527.5 488.7,527.1 489.1,529.0 489.4,525.1 489.8,527.4 490.1,526.8 490.5,526.3 490.8,528.0 491.2,526.4 491.5,526.9 491.9,528.4 492.2,526.6 492.6,525.8 492.9,528.5 493.3,526.1 493.6,526.7 494.0,526.4 494.3,526.5 494.7,525.7 495.0,527.1 495.4,526.1 495.7,527.2" fill="none" stroke="#20a03a" stroke-width="2.4" stroke-linejoin="round"/><polyline points="360.3,616.8 360.6,540.0 361.1,470.0 361.8,442.0 362.7,437.0 363.6,438.0 364.6,452.0 365.6,476.0 366.6,510.0 367.1,545.0 367.3,616.8" fill="none" stroke="#ee1010" stroke-width="1.8" stroke-linejoin="round"/><polyline points="349.6,527.0 350.0,527.0 350.3,527.0 350.7,527.0 351.0,527.0 351.4,527.0 351.7,527.0 352.1,527.0 352.4,527.0 352.8,527.0 353.1,527.0 353.5,527.0 353.8,527.0 354.2,527.0 354.5,527.0 354.9,527.0 355.2,527.0 355.6,527.0 355.9,527.0 356.3,527.0 356.6,527.0 357.0,527.0 357.3,527.0 357.7,527.0 358.0,527.0 358.4,527.0 358.7,527.0 359.1,527.0 359.4,527.0 359.8,527.0 360.1,527.0 360.5,527.0 360.8,527.0 361.2,527.0 361.5,527.0 361.9,513.8 362.2,494.2 362.6,481.1 362.9,471.5 363.3,464.1 363.6,458.1 364.0,453.0 364.3,448.5 364.7,444.6 365.0,441.2 365.4,438.0 365.7,437.4 366.1,438.0 366.4,438.6 366.8,439.2 367.2,439.7 367.5,440.3 367.9,440.9 368.2,441.4 368.6,442.0 368.9,442.6 369.3,443.1 369.6,443.7 370.0,444.2 370.3,444.8 370.7,445.3 371.0,445.9 371.4,446.4 371.7,447.0 372.1,447.5 372.4,448.1 372.8,448.6 373.1,449.1 373.5,449.7 373.8,450.2 374.2,450.7 374.5,451.2 374.9,451.8 375.2,452.3 375.6,452.8 375.9,453.3 376.3,453.8 376.6,454.4 377.0,454.9 377.3,455.4 377.7,455.9 378.0,456.4 378.4,456.9 378.7,457.4 379.1,457.9 379.4,458.4 379.8,458.9 380.1,459.4 380.5,459.8 380.8,460.3 381.2,460.8 381.5,461.3 381.9,461.8 382.2,462.3 382.6,462.7 382.9,463.2 383.3,463.7 383.6,464.2 384.0,464.6 384.4,465.1 384.7,465.6 385.1,466.0 385.4,466.5 385.8,466.9 386.1,467.4 386.5,467.9 386.8,468.3 387.2,468.8 387.5,469.2 387.9,469.7 388.2,470.1 388.6,470.6 388.9,471.0 389.3,471.5 389.6,471.9 390.0,472.3 390.3,472.8 390.7,473.2 391.0,473.7 391.4,474.1 391.7,474.5 392.1,475.0 392.4,475.4 392.8,475.8 393.1,476.3 393.5,476.7 393.8,477.1 394.2,477.5 394.5,478.0 394.9,478.4 395.2,478.8 395.6,479.2 395.9,479.6 396.3,480.1 396.6,480.5 397.0,480.9 397.3,481.3 397.7,481.7 398.0,482.1 398.4,482.5 398.7,482.9 399.1,483.3 399.4,483.7 399.8,484.1 400.1,484.5 400.5,484.9 400.8,485.3 401.2,485.7 401.5,486.1 401.9,486.5 402.3,486.9 402.6,487.3 403.0,487.7 403.3,488.1 403.7,488.5 404.0,488.9 404.4,489.3 404.7,489.6 405.1,490.0 405.4,490.4 405.8,490.8 406.1,491.2 406.5,491.5 406.8,491.9 407.2,492.3 407.5,492.7 407.9,493.0 408.2,493.4 408.6,493.8 408.9,494.1 409.3,494.5 409.6,494.9 410.0,495.2 410.3,495.6 410.7,496.0 411.0,496.3 411.4,496.7 411.7,497.0 412.1,497.4 412.4,497.7 412.8,498.1 413.1,498.4 413.5,498.8 413.8,499.1 414.2,499.5 414.5,499.8 414.9,500.2 415.2,500.5 415.6,500.8 415.9,501.2 416.3,501.5 416.6,501.8 417.0,502.2 417.3,502.5 417.7,502.8 418.0,503.1 418.4,503.5 418.7,503.8 419.1,504.1 419.5,504.4 419.8,504.7 420.2,505.1 420.5,505.4 420.9,505.7 421.2,506.0 421.6,506.3 421.9,506.6 422.3,506.9 422.6,507.2 423.0,507.5 423.3,507.8 423.7,508.1 424.0,508.3 424.4,508.6 424.7,508.9 425.1,509.2 425.4,509.5 425.8,509.8 426.1,510.0 426.5,510.3 426.8,510.6 427.2,510.8 427.5,511.1 427.9,511.4 428.2,511.6 428.6,511.9 428.9,512.1 429.3,512.4 429.6,512.6 430.0,512.9 430.3,513.1 430.7,513.4 431.0,513.6 431.4,513.8 431.7,514.1 432.1,514.3 432.4,514.5 432.8,514.8 433.1,515.0 433.5,515.2 433.8,515.4 434.2,515.6 434.5,515.9 434.9,516.1 435.2,516.3 435.6,516.5 435.9,516.7 436.3,516.9 436.6,517.1 437.0,517.3 437.4,517.5 437.7,517.6 438.1,517.8 438.4,518.0 438.8,518.2 439.1,518.4 439.5,518.5 439.8,518.7 440.2,518.9 440.5,519.1 440.9,519.2 441.2,519.4 441.6,519.5 441.9,519.7 442.3,519.8 442.6,520.0 443.0,520.1 443.3,520.3 443.7,520.4 444.0,520.6 444.4,520.7 444.7,520.9 445.1,521.0 445.4,521.1 445.8,521.2 446.1,521.4 446.5,521.5 446.8,521.6 447.2,521.7 447.5,521.9 447.9,522.0 448.2,522.1 448.6,522.2 448.9,522.3 449.3,522.4 449.6,522.5 450.0,522.6 450.3,522.7 450.7,522.8 451.0,522.9 451.4,523.0 451.7,523.1 452.1,523.2 452.4,523.3 452.8,523.4 453.1,523.5 453.5,523.5 453.8,523.6 454.2,523.7 454.6,523.8 454.9,523.9 455.3,523.9 455.6,524.0 456.0,524.1 456.3,524.2 456.7,524.2 457.0,524.3 457.4,524.4 457.7,524.4 458.1,524.5 458.4,524.6 458.8,524.6 459.1,524.7 459.5,524.7 459.8,524.8 460.2,524.8 460.5,524.9 460.9,524.9 461.2,525.0 461.6,525.0 461.9,525.1 462.3,525.1 462.6,525.2 463.0,525.2 463.3,525.3 463.7,525.3 464.0,525.4 464.4,525.4 464.7,525.5 465.1,525.5 465.4,525.5 465.8,525.6 466.1,525.6 466.5,525.6 466.8,525.7 467.2,525.7 467.5,525.7 467.9,525.8 468.2,525.8 468.6,525.8 468.9,525.9 469.3,525.9 469.6,525.9 470.0,526.0 470.3,526.0 470.7,526.0 471.0,526.0 471.4,526.1 471.8,526.1 472.1,526.1 472.5,526.1 472.8,526.2 473.2,526.2 473.5,526.2 473.9,526.2 474.2,526.2 474.6,526.3 474.9,526.3 475.3,526.3 475.6,526.3 476.0,526.3 476.3,526.4 476.7,526.4 477.0,526.4 477.4,526.4 477.7,526.4 478.1,526.4 478.4,526.5 478.8,526.5 479.1,526.5 479.5,526.5 479.8,526.5 480.2,526.5 480.5,526.5 480.9,526.6 481.2,526.6 481.6,526.6 481.9,526.6 482.3,526.6 482.6,526.6 483.0,526.6 483.3,526.6 483.7,526.6 484.0,526.7 484.4,526.7 484.7,526.7 485.1,526.7 485.4,526.7 485.8,526.7 486.1,526.7 486.5,526.7 486.8,526.7 487.2,526.7 487.5,526.7 487.9,526.8 488.2,526.8 488.6,526.8 488.9,526.8 489.3,526.8 489.7,526.8 490.0,526.8 490.4,526.8 490.7,526.8 491.1,526.8 491.4,526.8 491.8,526.8 492.1,526.8 492.5,526.8 492.8,526.8 493.2,526.8 493.5,526.8 493.9,526.9 494.2,526.9 494.6,526.9 494.9,526.9 495.3,526.9 495.6,526.9 496.0,526.9 496.3,526.9" fill="none" stroke="#000" stroke-width="1.7" stroke-linejoin="round"/></g><rect x="341.8" y="430.8" width="156.39999999999998" height="183.99999999999994" fill="none" stroke="#222" stroke-width="1"/><line y1="430.8" y2="433.3" x1="348.90" x2="348.90" stroke="#333" stroke-width="0.8"/><line y1="430.8" y2="433.3" x1="360.60" x2="360.60" stroke="#333" stroke-width="0.8"/><line y1="430.8" y2="433.3" x1="372.30" x2="372.30" stroke="#333" stroke-width="0.8"/><line y1="430.8" y2="433.3" x1="384.00" x2="384.00" stroke="#333" stroke-width="0.8"/><line y1="430.8" y2="433.3" x1="395.70" x2="395.70" stroke="#333" stroke-width="0.8"/><line y1="430.8" y2="433.3" x1="407.40" x2="407.40" stroke="#333" stroke-width="0.8"/><line y1="430.8" y2="433.3" x1="419.10" x2="419.10" stroke="#333" stroke-width="0.8"/><line y1="430.8" y2="433.3" x1="430.80" x2="430.80" stroke="#333" stroke-width="0.8"/><line y1="430.8" y2="433.3" x1="442.50" x2="442.50" stroke="#333" stroke-width="0.8"/><line y1="430.8" y2="433.3" x1="454.20" x2="454.20" stroke="#333" stroke-width="0.8"/><line y1="430.8" y2="433.3" x1="465.90" x2="465.90" stroke="#333" stroke-width="0.8"/><line y1="430.8" y2="433.3" x1="477.60" x2="477.60" stroke="#333" stroke-width="0.8"/><line y1="430.8" y2="433.3" x1="489.30" x2="489.30" stroke="#333" stroke-width="0.8"/><line y1="430.8" y2="433.3" x1="501.00" x2="501.00" stroke="#333" stroke-width="0.8"/><text x="336" y="610.50" text-anchor="end" font-family="Liberation Sans, sans-serif" font-size="11.5" fill="#222">10</text><text x="336.2" y="606.70" font-family="Liberation Sans, sans-serif" font-size="8" fill="#222">0</text><line x1="341.8" x2="345.3" y1="605.50" y2="605.50" stroke="#222" stroke-width="1"/><text x="336" y="576.40" text-anchor="end" font-family="Liberation Sans, sans-serif" font-size="11.5" fill="#222">10</text><text x="336.2" y="572.60" font-family="Liberation Sans, sans-serif" font-size="8" fill="#222">1</text><line x1="341.8" x2="345.3" y1="571.40" y2="571.40" stroke="#222" stroke-width="1"/><text x="336" y="542.30" text-anchor="end" font-family="Liberation Sans, sans-serif" font-size="11.5" fill="#222">10</text><text x="336.2" y="538.50" font-family="Liberation Sans, sans-serif" font-size="8" fill="#222">2</text><line x1="341.8" x2="345.3" y1="537.30" y2="537.30" stroke="#222" stroke-width="1"/><text x="336" y="508.20" text-anchor="end" font-family="Liberation Sans, sans-serif" font-size="11.5" fill="#222">10</text><text x="336.2" y="504.40" font-family="Liberation Sans, sans-serif" font-size="8" fill="#222">3</text><line x1="341.8" x2="345.3" y1="503.20" y2="503.20" stroke="#222" stroke-width="1"/><text x="336" y="474.10" text-anchor="end" font-family="Liberation Sans, sans-serif" font-size="11.5" fill="#222">10</text><text x="336.2" y="470.30" font-family="Liberation Sans, sans-serif" font-size="8" fill="#222">4</text><line x1="341.8" x2="345.3" y1="469.10" y2="469.10" stroke="#222" stroke-width="1"/><text x="336" y="440.00" text-anchor="end" font-family="Liberation Sans, sans-serif" font-size="11.5" fill="#222">10</text><text x="336.2" y="436.20" font-family="Liberation Sans, sans-serif" font-size="8" fill="#222">5</text><line x1="341.8" x2="345.3" y1="435.00" y2="435.00" stroke="#222" stroke-width="1"/><text transform="translate(315.3,527) rotate(-90)" text-anchor="middle" font-family="Liberation Sans, sans-serif" font-size="11.2" fill="#222">Intensity [ Cnts]</text><g clip-path="url(#cpr)"><line x1="341.8" x2="494.2" y1="679.62" y2="679.62" stroke="#c4c4c4" stroke-width="1"/><line x1="341.8" x2="494.2" y1="664.26" y2="664.26" stroke="#e4e4e4" stroke-width="1"/><line x1="341.8" x2="494.2" y1="633.54" y2="633.54" stroke="#e4e4e4" stroke-width="1"/><line x1="341.8" x2="494.2" y1="618.18" y2="618.18" stroke="#c4c4c4" stroke-width="1"/><line y1="615.0" y2="688.4" x1="348.90" x2="348.90" stroke="#a8a8a8" stroke-width="1"/><line y1="615.0" y2="688.4" x1="360.60" x2="360.60" stroke="#e4e4e4" stroke-width="1"/><line y1="615.0" y2="688.4" x1="372.30" x2="372.30" stroke="#e4e4e4" stroke-width="1"/><line y1="615.0" y2="688.4" x1="384.00" x2="384.00" stroke="#e4e4e4" stroke-width="1"/><line y1="615.0" y2="688.4" x1="395.70" x2="395.70" stroke="#e4e4e4" stroke-width="1"/><line y1="615.0" y2="688.4" x1="407.40" x2="407.40" stroke="#a8a8a8" stroke-width="1"/><line y1="615.0" y2="688.4" x1="419.10" x2="419.10" stroke="#e4e4e4" stroke-width="1"/><line y1="615.0" y2="688.4" x1="430.80" x2="430.80" stroke="#e4e4e4" stroke-width="1"/><line y1="615.0" y2="688.4" x1="442.50" x2="442.50" stroke="#e4e4e4" stroke-width="1"/><line y1="615.0" y2="688.4" x1="454.20" x2="454.20" stroke="#e4e4e4" stroke-width="1"/><line y1="615.0" y2="688.4" x1="465.90" x2="465.90" stroke="#a8a8a8" stroke-width="1"/><line y1="615.0" y2="688.4" x1="477.60" x2="477.60" stroke="#e4e4e4" stroke-width="1"/><line y1="615.0" y2="688.4" x1="489.30" x2="489.30" stroke="#e4e4e4" stroke-width="1"/><line y1="615.0" y2="688.4" x1="501.00" x2="501.00" stroke="#e4e4e4" stroke-width="1"/><polygon points="348.9,632.4 349.8,633.3 350.8,634.1 351.7,634.8 352.7,630.6 353.6,635.2 354.6,632.1 355.5,634.9 356.5,636.5 357.4,635.6 358.4,624.1 359.3,624.6 360.3,640.4 361.2,626.7 362.2,639.5 363.1,637.1 364.1,642.0 365.0,630.2 366.0,623.3 366.9,630.5 367.9,633.3 368.8,641.3 369.8,633.8 370.7,632.5 371.7,629.6 372.6,633.8 373.6,637.5 374.5,640.5 375.5,629.1 376.4,634.2 377.4,636.7 378.3,630.7 379.3,635.6 380.2,635.7 381.2,631.9 382.1,634.8 383.1,642.0 384.0,631.3 385.0,633.4 385.9,632.4 386.9,632.4 387.8,630.6 388.8,637.0 389.7,629.3 390.7,629.5 391.6,622.8 392.6,632.5 393.5,638.2 394.5,633.9 395.4,641.9 396.4,625.2 397.3,638.0 398.3,632.9 399.2,631.3 400.2,634.6 401.1,639.2 402.1,636.0 403.0,631.2 404.0,630.5 404.9,639.5 405.9,627.6 406.8,630.4 407.8,631.8 408.7,635.4 409.7,636.2 410.6,628.7 411.6,629.0 412.5,637.3 413.5,636.8 414.4,639.6 415.4,640.9 416.3,637.1 417.3,635.9 418.2,636.7 419.2,633.4 420.1,640.5 421.1,642.0 422.0,642.0 423.0,634.5 423.9,635.3 424.9,628.1 425.8,638.2 426.8,631.0 427.7,632.5 428.7,627.7 429.6,635.8 430.6,642.0 431.5,635.4 432.5,629.8 433.4,638.7 434.4,632.6 435.3,633.4 436.3,641.6 437.2,636.7 438.2,635.1 439.1,633.1 440.1,636.0 441.0,638.6 442.0,639.3 442.9,631.2 443.9,640.2 444.8,635.9 445.8,636.1 446.7,642.0 447.7,642.0 448.6,638.4 449.6,639.6 450.5,634.8 451.5,633.0 452.4,637.4 453.4,634.8 454.3,635.9 455.3,625.8 456.2,626.8 457.2,632.2 458.1,634.9 459.1,635.8 460.0,630.4 461.0,630.3 461.9,636.8 462.9,633.2 463.8,637.3 464.8,630.8 465.7,636.8 466.7,637.8 467.6,632.3 468.6,632.8 469.5,631.1 470.5,630.7 471.4,641.2 472.4,642.0 473.3,640.7 474.3,636.0 475.2,630.7 476.2,636.9 477.1,630.0 478.1,636.9 479.0,632.3 480.0,632.6 480.9,630.8 481.9,635.9 482.8,631.7 483.8,626.6 484.7,633.9 485.7,638.5 486.6,618.9 487.6,626.7 488.5,624.1 489.5,634.6 490.4,632.0 491.4,626.7 492.3,638.7 493.3,631.2 494.2,640.1 495.2,636.6 495.2,663.2 494.2,663.2 493.3,656.9 492.3,660.2 491.4,660.7 490.4,672.3 489.5,662.4 488.5,664.5 487.6,660.8 486.6,661.2 485.7,667.3 484.7,667.7 483.8,665.6 482.8,661.5 481.9,663.3 480.9,656.7 480.0,674.3 479.0,657.8 478.1,665.0 477.1,661.1 476.2,665.5 475.2,663.1 474.3,663.8 473.3,667.1 472.4,668.1 471.4,662.2 470.5,666.0 469.5,669.0 468.6,663.6 467.6,668.6 466.7,660.1 465.7,660.9 464.8,665.9 463.8,659.9 462.9,657.1 461.9,665.1 461.0,661.3 460.0,668.2 459.1,659.1 458.1,664.4 457.2,669.3 456.2,662.8 455.3,669.8 454.3,665.6 453.4,666.7 452.4,655.8 451.5,660.4 450.5,656.7 449.6,656.0 448.6,664.7 447.7,659.9 446.7,667.1 445.8,663.9 444.8,669.4 443.9,657.5 442.9,663.8 442.0,655.8 441.0,670.0 440.1,664.4 439.1,660.0 438.2,659.9 437.2,658.5 436.3,665.4 435.3,661.0 434.4,659.2 433.4,667.0 432.5,664.7 431.5,661.9 430.6,655.8 429.6,661.9 428.7,656.2 427.7,655.8 426.8,663.9 425.8,656.2 424.9,673.8 423.9,662.7 423.0,667.6 422.0,664.5 421.1,663.4 420.1,657.0 419.2,659.1 418.2,655.8 417.3,660.9 416.3,667.3 415.4,659.6 414.4,655.8 413.5,662.1 412.5,656.1 411.6,661.0 410.6,663.3 409.7,658.2 408.7,666.1 407.8,661.1 406.8,662.5 405.9,670.0 404.9,657.4 404.0,661.7 403.0,656.1 402.1,664.1 401.1,658.6 400.2,667.8 399.2,662.7 398.3,675.1 397.3,660.2 396.4,663.7 395.4,655.8 394.5,662.6 393.5,669.7 392.6,661.2 391.6,672.6 390.7,660.7 389.7,668.1 388.8,656.5 387.8,665.2 386.9,667.7 385.9,662.3 385.0,661.9 384.0,655.8 383.1,664.6 382.1,656.2 381.2,663.0 380.2,663.4 379.3,662.1 378.3,675.7 377.4,663.4 376.4,655.8 375.5,663.8 374.5,665.7 373.6,660.3 372.6,661.1 371.7,674.3 370.7,665.2 369.8,667.3 368.8,667.9 367.9,661.2 366.9,661.7 366.0,669.6 365.0,655.8 364.1,662.7 363.1,667.7 362.2,657.1 361.2,664.9 360.3,668.0 359.3,661.6 358.4,655.8 357.4,669.3 356.5,666.1 355.5,662.6 354.6,664.6 353.6,666.3 352.7,663.7 351.7,668.9 350.8,666.9 349.8,661.9 348.9,658.9" fill="#20a03a" stroke="#20a03a" stroke-width="0.5"/><line x1="341.8" x2="494.2" y1="648.9" y2="648.9" stroke="#000" stroke-width="1.7"/></g><line x1="341.8" x2="498.2" y1="615.0" y2="615.0" stroke="#000" stroke-width="1.6"/><rect x="341.8" y="615.0" width="156.39999999999998" height="73.39999999999998" fill="none" stroke="#222" stroke-width="1"/><text x="339" y="622.58" text-anchor="end" font-family="Liberation Sans, sans-serif" font-size="12" fill="#222">4</text><line x1="341.8" x2="345.3" y1="618.18" y2="618.18" stroke="#222" stroke-width="1"/><text x="339" y="653.30" text-anchor="end" font-family="Liberation Sans, sans-serif" font-size="12" fill="#222">0</text><line x1="341.8" x2="345.3" y1="648.90" y2="648.90" stroke="#222" stroke-width="1"/><text x="339" y="684.02" text-anchor="end" font-family="Liberation Sans, sans-serif" font-size="12" fill="#222">-4</text><line x1="341.8" x2="345.3" y1="679.62" y2="679.62" stroke="#222" stroke-width="1"/><text x="348.60" y="700.3" text-anchor="middle" font-family="Liberation Sans, sans-serif" font-size="12" fill="#222">0</text><text x="407.10" y="700.3" text-anchor="middle" font-family="Liberation Sans, sans-serif" font-size="12" fill="#222">10</text><text x="465.60" y="700.3" text-anchor="middle" font-family="Liberation Sans, sans-serif" font-size="12" fill="#222">20</text><line y1="685.9" y2="688.4" x1="348.90" x2="348.90" stroke="#333" stroke-width="0.8"/><line y1="685.9" y2="688.4" x1="360.60" x2="360.60" stroke="#333" stroke-width="0.8"/><line y1="685.9" y2="688.4" x1="372.30" x2="372.30" stroke="#333" stroke-width="0.8"/><line y1="685.9" y2="688.4" x1="384.00" x2="384.00" stroke="#333" stroke-width="0.8"/><line y1="685.9" y2="688.4" x1="395.70" x2="395.70" stroke="#333" stroke-width="0.8"/><line y1="685.9" y2="688.4" x1="407.40" x2="407.40" stroke="#333" stroke-width="0.8"/><line y1="685.9" y2="688.4" x1="419.10" x2="419.10" stroke="#333" stroke-width="0.8"/><line y1="685.9" y2="688.4" x1="430.80" x2="430.80" stroke="#333" stroke-width="0.8"/><line y1="685.9" y2="688.4" x1="442.50" x2="442.50" stroke="#333" stroke-width="0.8"/><line y1="685.9" y2="688.4" x1="454.20" x2="454.20" stroke="#333" stroke-width="0.8"/><line y1="685.9" y2="688.4" x1="465.90" x2="465.90" stroke="#333" stroke-width="0.8"/><line y1="685.9" y2="688.4" x1="477.60" x2="477.60" stroke="#333" stroke-width="0.8"/><line y1="685.9" y2="688.4" x1="489.30" x2="489.30" stroke="#333" stroke-width="0.8"/><line y1="685.9" y2="688.4" x1="501.00" x2="501.00" stroke="#333" stroke-width="0.8"/><svg x="300" y="615.2" width="30" height="73.4" overflow="hidden"><text transform="translate(15.4,40.4) rotate(-90)" text-anchor="middle" font-family="Liberation Sans, sans-serif" font-size="11.2" fill="#222">Resids. [StdDev.]</text></svg><rect x="348.1" y="430.8" width="1.6" height="257.59999999999997" fill="#1010ff"/><polygon points="349.6,451.1 349.6,454.9 352.2,453.0" fill="#1010ff"/><polygon points="494.4,451.1 494.4,454.9 491.8,453.0" fill="#1010ff"/><polygon points="349.6,473.6 349.6,477.4 352.2,475.5" fill="#1010ff"/><polygon points="494.4,473.6 494.4,477.4 491.8,475.5" fill="#1010ff"/><polygon points="349.6,496.0 349.6,499.8 352.2,497.9" fill="#1010ff"/><polygon points="494.4,496.0 494.4,499.8 491.8,497.9" fill="#1010ff"/><polygon points="349.6,518.4 349.6,522.2 352.2,520.3" fill="#1010ff"/><polygon points="494.4,518.4 494.4,522.2 491.8,520.3" fill="#1010ff"/><polygon points="349.6,540.9 349.6,544.6 352.2,542.8" fill="#1010ff"/><polygon points="494.4,540.9 494.4,544.6 491.8,542.8" fill="#1010ff"/><polygon points="349.6,563.3 349.6,567.1 352.2,565.2" fill="#1010ff"/><polygon points="494.4,563.3 494.4,567.1 491.8,565.2" fill="#1010ff"/><polygon points="349.6,585.7 349.6,589.5 352.2,587.6" fill="#1010ff"/><polygon points="494.4,585.7 494.4,589.5 491.8,587.6" fill="#1010ff"/><polygon points="349.6,608.1 349.6,611.9 352.2,610.0" fill="#1010ff"/><polygon points="494.4,608.1 494.4,611.9 491.8,610.0" fill="#1010ff"/><polygon points="349.6,630.6 349.6,634.4 352.2,632.5" fill="#1010ff"/><polygon points="494.4,630.6 494.4,634.4 491.8,632.5" fill="#1010ff"/><polygon points="349.6,653.0 349.6,656.8 352.2,654.9" fill="#1010ff"/><polygon points="494.4,653.0 494.4,656.8 491.8,654.9" fill="#1010ff"/><polygon points="349.6,675.4 349.6,679.2 352.2,677.3" fill="#1010ff"/><polygon points="494.4,675.4 494.4,679.2 491.8,677.3" fill="#1010ff"/><svg x="421.3" y="434.8" width="72.9" height="68" overflow="hidden"><rect x="0.5" y="0.5" width="90" height="67" fill="#ffffc6" stroke="#9a9a8a" stroke-width="1"/><rect x="1.4" y="3.4" width="9.4" height="8" fill="#bdbdbd"/><text x="14.9" y="10.5" font-family="DejaVu Sans, sans-serif" font-size="8.4" fill="#222">Pixel (1,1)</text><rect x="1.4" y="17.0" width="9.4" height="8" fill="#bdbdbd"/><text x="14.9" y="24.1" font-family="DejaVu Sans, sans-serif" font-size="8.4" fill="#222">ROI 0</text><rect x="1.4" y="30.5" width="9.4" height="8" fill="#f01010"/><text x="14.9" y="37.6" font-family="DejaVu Sans, sans-serif" font-size="8.4" fill="#222">Calculated IRF</text><rect x="1.4" y="44.1" width="9.4" height="8" fill="#20a03a"/><text x="14.9" y="51.2" font-family="DejaVu Sans, sans-serif" font-size="8.4" fill="#222">Overall Decay</text><rect x="1.4" y="57.6" width="9.4" height="8" fill="#000"/><text x="14.9" y="64.7" font-family="DejaVu Sans, sans-serif" font-size="8.4" fill="#222">Fitted Curve</text></svg></svg><div class="" style="left:494.20px;top:407.40px;width:15.60px;height:293.40px;background:#cad2c8;border-left:1px solid #aab0a8;box-sizing:border-box;"></div><div class="sb" style="left:494.80px;top:407.60px;width:14.80px;height:15.20px;"></div><div class="sb" style="left:494.80px;top:423.00px;width:14.80px;height:240.60px;"></div><div class="sb" style="left:494.80px;top:686.00px;width:14.80px;height:14.60px;"></div><div class="" style="left:297.40px;top:701.80px;width:197.00px;height:10.00px;background:#cad2c8;"></div><div class="sb" style="left:297.60px;top:702.20px;width:15.00px;height:12.00px;"></div><div class="sb" style="left:312.80px;top:702.20px;width:153.00px;height:12.00px;"></div><div class="sb" style="left:478.60px;top:702.20px;width:15.20px;height:12.00px;"></div><div class="" style="left:653.80px;top:5.00px;width:390.20px;height:704.60px;background:#fff;"></div><div class="" style="left:652.80px;top:3.40px;width:0.90px;height:356.00px;background:#a0a59e;"></div><svg class="ov" width="1193" height="711" viewBox="0 0 1193 711"><text x="848.5" y="22.6" text-anchor="middle" font-family="Liberation Sans, sans-serif" font-size="12" font-weight="bold" fill="#000">Efficiency Histogram</text><line x1="697.0" x2="1035.8" y1="306.48" y2="306.48" stroke="#d6efd9" stroke-width="1"/><line x1="697.0" x2="1035.8" y1="297.70" y2="297.70" stroke="#d6efd9" stroke-width="1"/><line x1="697.0" x2="1035.8" y1="288.93" y2="288.93" stroke="#d6efd9" stroke-width="1"/><line x1="697.0" x2="1035.8" y1="271.39" y2="271.39" stroke="#d6efd9" stroke-width="1"/><line x1="697.0" x2="1035.8" y1="262.62" y2="262.62" stroke="#d6efd9" stroke-width="1"/><line x1="697.0" x2="1035.8" y1="253.84" y2="253.84" stroke="#d6efd9" stroke-width="1"/><line x1="697.0" x2="1035.8" y1="236.30" y2="236.30" stroke="#d6efd9" stroke-width="1"/><line x1="697.0" x2="1035.8" y1="227.53" y2="227.53" stroke="#d6efd9" stroke-width="1"/><line x1="697.0" x2="1035.8" y1="218.75" y2="218.75" stroke="#d6efd9" stroke-width="1"/><line x1="697.0" x2="1035.8" y1="201.21" y2="201.21" stroke="#d6efd9" stroke-width="1"/><line x1="697.0" x2="1035.8" y1="192.44" y2="192.44" stroke="#d6efd9" stroke-width="1"/><line x1="697.0" x2="1035.8" y1="183.66" y2="183.66" stroke="#d6efd9" stroke-width="1"/><line x1="697.0" x2="1035.8" y1="166.12" y2="166.12" stroke="#d6efd9" stroke-width="1"/><line x1="697.0" x2="1035.8" y1="157.34" y2="157.34" stroke="#d6efd9" stroke-width="1"/><line x1="697.0" x2="1035.8" y1="148.57" y2="148.57" stroke="#d6efd9" stroke-width="1"/><line x1="697.0" x2="1035.8" y1="131.03" y2="131.03" stroke="#d6efd9" stroke-width="1"/><line x1="697.0" x2="1035.8" y1="122.25" y2="122.25" stroke="#d6efd9" stroke-width="1"/><line x1="697.0" x2="1035.8" y1="113.48" y2="113.48" stroke="#d6efd9" stroke-width="1"/><line x1="697.0" x2="1035.8" y1="95.94" y2="95.94" stroke="#d6efd9" stroke-width="1"/><line x1="697.0" x2="1035.8" y1="87.17" y2="87.17" stroke="#d6efd9" stroke-width="1"/><line x1="697.0" x2="1035.8" y1="78.39" y2="78.39" stroke="#d6efd9" stroke-width="1"/><line x1="697.0" x2="1035.8" y1="60.85" y2="60.85" stroke="#d6efd9" stroke-width="1"/><line x1="697.0" x2="1035.8" y1="52.08" y2="52.08" stroke="#d6efd9" stroke-width="1"/><line x1="697.0" x2="1035.8" y1="43.30" y2="43.30" stroke="#d6efd9" stroke-width="1"/><line y1="27.4" y2="321.4" x1="720.47" x2="720.47" stroke="#d6efd9" stroke-width="1"/><line y1="27.4" y2="321.4" x1="736.74" x2="736.74" stroke="#d6efd9" stroke-width="1"/><line y1="27.4" y2="321.4" x1="753.01" x2="753.01" stroke="#d6efd9" stroke-width="1"/><line y1="27.4" y2="321.4" x1="785.55" x2="785.55" stroke="#d6efd9" stroke-width="1"/><line y1="27.4" y2="321.4" x1="801.82" x2="801.82" stroke="#d6efd9" stroke-width="1"/><line y1="27.4" y2="321.4" x1="818.09" x2="818.09" stroke="#d6efd9" stroke-width="1"/><line y1="27.4" y2="321.4" x1="850.63" x2="850.63" stroke="#d6efd9" stroke-width="1"/><line y1="27.4" y2="321.4" x1="866.90" x2="866.90" stroke="#d6efd9" stroke-width="1"/><line y1="27.4" y2="321.4" x1="883.17" x2="883.17" stroke="#d6efd9" stroke-width="1"/><line y1="27.4" y2="321.4" x1="915.71" x2="915.71" stroke="#d6efd9" stroke-width="1"/><line y1="27.4" y2="321.4" x1="931.98" x2="931.98" stroke="#d6efd9" stroke-width="1"/><line y1="27.4" y2="321.4" x1="948.25" x2="948.25" stroke="#d6efd9" stroke-width="1"/><line y1="27.4" y2="321.4" x1="980.79" x2="980.79" stroke="#d6efd9" stroke-width="1"/><line y1="27.4" y2="321.4" x1="997.06" x2="997.06" stroke="#d6efd9" stroke-width="1"/><line y1="27.4" y2="321.4" x1="1013.33" x2="1013.33" stroke="#d6efd9" stroke-width="1"/><line x1="697.0" x2="1035.8" y1="315.25" y2="315.25" stroke="#86cf92" stroke-width="1.1"/><text x="695" y="319.65" text-anchor="end" font-family="Liberation Sans, sans-serif" font-size="12" fill="#222">0,0</text><line x1="697.0" x2="1035.8" y1="280.16" y2="280.16" stroke="#86cf92" stroke-width="1.1"/><text x="695" y="284.56" text-anchor="end" font-family="Liberation Sans, sans-serif" font-size="12" fill="#222">0,2</text><line x1="697.0" x2="1035.8" y1="245.07" y2="245.07" stroke="#86cf92" stroke-width="1.1"/><text x="695" y="249.47" text-anchor="end" font-family="Liberation Sans, sans-serif" font-size="12" fill="#222">0,4</text><line x1="697.0" x2="1035.8" y1="209.98" y2="209.98" stroke="#86cf92" stroke-width="1.1"/><text x="695" y="214.38" text-anchor="end" font-family="Liberation Sans, sans-serif" font-size="12" fill="#222">0,6</text><line x1="697.0" x2="1035.8" y1="174.89" y2="174.89" stroke="#86cf92" stroke-width="1.1"/><text x="695" y="179.29" text-anchor="end" font-family="Liberation Sans, sans-serif" font-size="12" fill="#222">0,8</text><line x1="697.0" x2="1035.8" y1="139.80" y2="139.80" stroke="#86cf92" stroke-width="1.1"/><text x="695" y="144.20" text-anchor="end" font-family="Liberation Sans, sans-serif" font-size="12" fill="#222">1,0</text><line x1="697.0" x2="1035.8" y1="104.71" y2="104.71" stroke="#86cf92" stroke-width="1.1"/><text x="695" y="109.11" text-anchor="end" font-family="Liberation Sans, sans-serif" font-size="12" fill="#222">1,2</text><line x1="697.0" x2="1035.8" y1="69.62" y2="69.62" stroke="#86cf92" stroke-width="1.1"/><text x="695" y="74.02" text-anchor="end" font-family="Liberation Sans, sans-serif" font-size="12" fill="#222">1,4</text><line x1="697.0" x2="1035.8" y1="34.53" y2="34.53" stroke="#86cf92" stroke-width="1.1"/><text x="695" y="38.93" text-anchor="end" font-family="Liberation Sans, sans-serif" font-size="12" fill="#222">1,6</text><line y1="27.4" y2="321.4" x1="704.20" x2="704.20" stroke="#86cf92" stroke-width="1.1"/><line y1="27.4" y2="321.4" x1="769.28" x2="769.28" stroke="#86cf92" stroke-width="1.1"/><line y1="27.4" y2="321.4" x1="834.36" x2="834.36" stroke="#86cf92" stroke-width="1.1"/><line y1="27.4" y2="321.4" x1="899.44" x2="899.44" stroke="#86cf92" stroke-width="1.1"/><line y1="27.4" y2="321.4" x1="964.52" x2="964.52" stroke="#86cf92" stroke-width="1.1"/><line y1="27.4" y2="321.4" x1="1029.60" x2="1029.60" stroke="#86cf92" stroke-width="1.1"/><rect x="697.0" y="27.4" width="338.79999999999995" height="294.0" fill="none" stroke="#5bbf6c" stroke-width="1.2"/><line x1="697.0" x2="700.0" y1="315.25" y2="315.25" stroke="#5bbf6c" stroke-width="1"/><line x1="697.0" x2="700.0" y1="306.48" y2="306.48" stroke="#5bbf6c" stroke-width="1"/><line x1="697.0" x2="700.0" y1="297.70" y2="297.70" stroke="#5bbf6c" stroke-width="1"/><line x1="697.0" x2="700.0" y1="288.93" y2="288.93" stroke="#5bbf6c" stroke-width="1"/><line x1="697.0" x2="700.0" y1="280.16" y2="280.16" stroke="#5bbf6c" stroke-width="1"/><line x1="697.0" x2="700.0" y1="271.39" y2="271.39" stroke="#5bbf6c" stroke-width="1"/><line x1="697.0" x2="700.0" y1="262.62" y2="262.62" stroke="#5bbf6c" stroke-width="1"/><line x1="697.0" x2="700.0" y1="253.84" y2="253.84" stroke="#5bbf6c" stroke-width="1"/><line x1="697.0" x2="700.0" y1="245.07" y2="245.07" stroke="#5bbf6c" stroke-width="1"/><line x1="697.0" x2="700.0" y1="236.30" y2="236.30" stroke="#5bbf6c" stroke-width="1"/><line x1="697.0" x2="700.0" y1="227.53" y2="227.53" stroke="#5bbf6c" stroke-width="1"/><line x1="697.0" x2="700.0" y1="218.75" y2="218.75" stroke="#5bbf6c" stroke-width="1"/><line x1="697.0" x2="700.0" y1="209.98" y2="209.98" stroke="#5bbf6c" stroke-width="1"/><line x1="697.0" x2="700.0" y1="201.21" y2="201.21" stroke="#5bbf6c" stroke-width="1"/><line x1="697.0" x2="700.0" y1="192.44" y2="192.44" stroke="#5bbf6c" stroke-width="1"/><line x1="697.0" x2="700.0" y1="183.66" y2="183.66" stroke="#5bbf6c" stroke-width="1"/><line x1="697.0" x2="700.0" y1="174.89" y2="174.89" stroke="#5bbf6c" stroke-width="1"/><line x1="697.0" x2="700.0" y1="166.12" y2="166.12" stroke="#5bbf6c" stroke-width="1"/><line x1="697.0" x2="700.0" y1="157.34" y2="157.34" stroke="#5bbf6c" stroke-width="1"/><line x1="697.0" x2="700.0" y1="148.57" y2="148.57" stroke="#5bbf6c" stroke-width="1"/><line x1="697.0" x2="700.0" y1="139.80" y2="139.80" stroke="#5bbf6c" stroke-width="1"/><line x1="697.0" x2="700.0" y1="131.03" y2="131.03" stroke="#5bbf6c" stroke-width="1"/><line x1="697.0" x2="700.0" y1="122.25" y2="122.25" stroke="#5bbf6c" stroke-width="1"/><line x1="697.0" x2="700.0" y1="113.48" y2="113.48" stroke="#5bbf6c" stroke-width="1"/><line x1="697.0" x2="700.0" y1="104.71" y2="104.71" stroke="#5bbf6c" stroke-width="1"/><line x1="697.0" x2="700.0" y1="95.94" y2="95.94" stroke="#5bbf6c" stroke-width="1"/><line x1="697.0" x2="700.0" y1="87.17" y2="87.17" stroke="#5bbf6c" stroke-width="1"/><line x1="697.0" x2="700.0" y1="78.39" y2="78.39" stroke="#5bbf6c" stroke-width="1"/><line x1="697.0" x2="700.0" y1="69.62" y2="69.62" stroke="#5bbf6c" stroke-width="1"/><line x1="697.0" x2="700.0" y1="60.85" y2="60.85" stroke="#5bbf6c" stroke-width="1"/><line x1="697.0" x2="700.0" y1="52.08" y2="52.08" stroke="#5bbf6c" stroke-width="1"/><line x1="697.0" x2="700.0" y1="43.30" y2="43.30" stroke="#5bbf6c" stroke-width="1"/><line x1="697.0" x2="700.0" y1="34.53" y2="34.53" stroke="#5bbf6c" stroke-width="1"/><rect x="700.03" y="314.72" width="8.34" height="6.68" fill="#20a03a" stroke="#0b2a10" stroke-width="0.9"/><rect x="708.37" y="314.72" width="8.34" height="6.68" fill="#20a03a" stroke="#0b2a10" stroke-width="0.9"/><rect x="716.72" y="314.72" width="8.34" height="6.68" fill="#20a03a" stroke="#0b2a10" stroke-width="0.9"/><rect x="725.06" y="314.72" width="8.34" height="6.68" fill="#20a03a" stroke="#0b2a10" stroke-width="0.9"/><rect x="733.40" y="314.72" width="8.34" height="6.68" fill="#20a03a" stroke="#0b2a10" stroke-width="0.9"/><rect x="741.75" y="314.72" width="8.34" height="6.68" fill="#20a03a" stroke="#0b2a10" stroke-width="0.9"/><rect x="750.09" y="314.72" width="8.34" height="6.68" fill="#20a03a" stroke="#0b2a10" stroke-width="0.9"/><rect x="758.43" y="313.85" width="8.34" height="7.55" fill="#20a03a" stroke="#0b2a10" stroke-width="0.9"/><rect x="766.78" y="313.85" width="8.34" height="7.55" fill="#20a03a" stroke="#0b2a10" stroke-width="0.9"/><rect x="775.12" y="313.85" width="8.34" height="7.55" fill="#20a03a" stroke="#0b2a10" stroke-width="0.9"/><rect x="783.46" y="313.14" width="8.34" height="8.26" fill="#20a03a" stroke="#0b2a10" stroke-width="0.9"/><rect x="791.81" y="311.04" width="8.34" height="10.36" fill="#20a03a" stroke="#0b2a10" stroke-width="0.9"/><rect x="800.15" y="310.34" width="8.34" height="11.06" fill="#20a03a" stroke="#0b2a10" stroke-width="0.9"/><rect x="808.49" y="311.21" width="8.34" height="10.19" fill="#20a03a" stroke="#0b2a10" stroke-width="0.9"/><rect x="816.84" y="307.35" width="8.34" height="14.05" fill="#20a03a" stroke="#0b2a10" stroke-width="0.9"/><rect x="825.18" y="306.48" width="8.34" height="14.92" fill="#20a03a" stroke="#0b2a10" stroke-width="0.9"/><rect x="833.53" y="304.20" width="8.34" height="17.20" fill="#20a03a" stroke="#0b2a10" stroke-width="0.9"/><rect x="841.87" y="297.70" width="8.34" height="23.69" fill="#20a03a" stroke="#0b2a10" stroke-width="0.9"/><rect x="850.21" y="283.14" width="8.34" height="38.26" fill="#20a03a" stroke="#0b2a10" stroke-width="0.9"/><rect x="858.56" y="257.35" width="8.34" height="64.05" fill="#20a03a" stroke="#0b2a10" stroke-width="0.9"/><rect x="866.90" y="178.40" width="8.34" height="143.00" fill="#20a03a" stroke="#0b2a10" stroke-width="0.9"/><rect x="875.24" y="95.59" width="8.34" height="225.81" fill="#20a03a" stroke="#0b2a10" stroke-width="0.9"/><rect x="883.59" y="35.06" width="8.34" height="286.34" fill="#20a03a" stroke="#0b2a10" stroke-width="0.9"/><rect x="891.93" y="88.57" width="8.34" height="232.83" fill="#20a03a" stroke="#0b2a10" stroke-width="0.9"/><rect x="900.27" y="182.79" width="8.34" height="138.61" fill="#20a03a" stroke="#0b2a10" stroke-width="0.9"/><rect x="908.62" y="235.24" width="8.34" height="86.16" fill="#20a03a" stroke="#0b2a10" stroke-width="0.9"/><rect x="916.96" y="270.51" width="8.34" height="50.89" fill="#20a03a" stroke="#0b2a10" stroke-width="0.9"/><rect x="925.31" y="282.44" width="8.34" height="38.96" fill="#20a03a" stroke="#0b2a10" stroke-width="0.9"/><rect x="933.65" y="295.25" width="8.34" height="26.15" fill="#20a03a" stroke="#0b2a10" stroke-width="0.9"/><rect x="941.99" y="302.09" width="8.34" height="19.31" fill="#20a03a" stroke="#0b2a10" stroke-width="0.9"/><rect x="950.34" y="305.07" width="8.34" height="16.33" fill="#20a03a" stroke="#0b2a10" stroke-width="0.9"/><rect x="958.68" y="303.49" width="8.34" height="17.91" fill="#20a03a" stroke="#0b2a10" stroke-width="0.9"/><rect x="967.02" y="306.48" width="8.34" height="14.92" fill="#20a03a" stroke="#0b2a10" stroke-width="0.9"/><rect x="975.37" y="311.04" width="8.34" height="10.36" fill="#20a03a" stroke="#0b2a10" stroke-width="0.9"/><rect x="983.71" y="310.34" width="8.34" height="11.06" fill="#20a03a" stroke="#0b2a10" stroke-width="0.9"/><rect x="992.05" y="311.21" width="8.34" height="10.19" fill="#20a03a" stroke="#0b2a10" stroke-width="0.9"/><rect x="1000.40" y="310.34" width="8.34" height="11.06" fill="#20a03a" stroke="#0b2a10" stroke-width="0.9"/><rect x="1008.74" y="312.44" width="8.34" height="8.96" fill="#20a03a" stroke="#0b2a10" stroke-width="0.9"/><rect x="1017.08" y="312.44" width="8.34" height="8.96" fill="#20a03a" stroke="#0b2a10" stroke-width="0.9"/><rect x="1025.43" y="304.37" width="8.34" height="17.03" fill="#20a03a" stroke="#0b2a10" stroke-width="0.9"/><text x="704.60" y="333.4" text-anchor="middle" font-family="Liberation Sans, sans-serif" font-size="12" fill="#222">0</text><text x="769.68" y="333.4" text-anchor="middle" font-family="Liberation Sans, sans-serif" font-size="12" fill="#222">20</text><text x="834.76" y="333.4" text-anchor="middle" font-family="Liberation Sans, sans-serif" font-size="12" fill="#222">40</text><text x="899.84" y="333.4" text-anchor="middle" font-family="Liberation Sans, sans-serif" font-size="12" fill="#222">60</text><text x="964.92" y="333.4" text-anchor="middle" font-family="Liberation Sans, sans-serif" font-size="12" fill="#222">80</text><svg x="1018" y="322" width="17.8" height="16" overflow="hidden"><text x="3.2" y="11.4" font-family="Liberation Sans, sans-serif" font-size="12" fill="#222">100</text></svg><text x="839.6" y="349.9" font-family="Liberation Sans, sans-serif" font-size="12" fill="#222">E<tspan font-size="9" dy="3.3">FRET</tspan><tspan dy="-3.3"> [%]</tspan></text><text transform="translate(672.2,227.2) rotate(-90)" font-family="Liberation Sans, sans-serif" font-size="11" fill="#222">Occur. [10<tspan font-size="8.5" dx="7.2" dy="-3.4">3</tspan><tspan dx="2.2" dy="3.4"> Events]</tspan></text><g transform="translate(676.2,173.9)"><circle r="13" fill="none" stroke="#ee1111" stroke-width="1.5"/><polygon points="0,-10 6.4,-3.6 -6.4,-3.6" fill="#ee1111"/><polygon points="0,10.4 6.4,4 -6.4,4" fill="#ee1111"/><rect x="-6.4" y="-4" width="2.2" height="8.4" fill="#ee1111"/><circle r="1.2" fill="#ee1111"/></g><text x="848.5" y="380" text-anchor="middle" font-family="Liberation Sans, sans-serif" font-size="12" font-weight="bold" fill="#000">Binding Histogram</text><line x1="703.9" x2="1035.2" y1="666.79" y2="666.79" stroke="#ececec" stroke-width="1"/><line x1="703.9" x2="1035.2" y1="662.68" y2="662.68" stroke="#ececec" stroke-width="1"/><line x1="703.9" x2="1035.2" y1="658.57" y2="658.57" stroke="#ececec" stroke-width="1"/><line x1="703.9" x2="1035.2" y1="654.46" y2="654.46" stroke="#ececec" stroke-width="1"/><line x1="703.9" x2="1035.2" y1="646.24" y2="646.24" stroke="#ececec" stroke-width="1"/><line x1="703.9" x2="1035.2" y1="642.13" y2="642.13" stroke="#ececec" stroke-width="1"/><line x1="703.9" x2="1035.2" y1="638.02" y2="638.02" stroke="#ececec" stroke-width="1"/><line x1="703.9" x2="1035.2" y1="633.91" y2="633.91" stroke="#ececec" stroke-width="1"/><line x1="703.9" x2="1035.2" y1="625.69" y2="625.69" stroke="#ececec" stroke-width="1"/><line x1="703.9" x2="1035.2" y1="621.58" y2="621.58" stroke="#ececec" stroke-width="1"/><line x1="703.9" x2="1035.2" y1="617.47" y2="617.47" stroke="#ececec" stroke-width="1"/><line x1="703.9" x2="1035.2" y1="613.36" y2="613.36" stroke="#ececec" stroke-width="1"/><line x1="703.9" x2="1035.2" y1="605.14" y2="605.14" stroke="#ececec" stroke-width="1"/><line x1="703.9" x2="1035.2" y1="601.03" y2="601.03" stroke="#ececec" stroke-width="1"/><line x1="703.9" x2="1035.2" y1="596.92" y2="596.92" stroke="#ececec" stroke-width="1"/><line x1="703.9" x2="1035.2" y1="592.81" y2="592.81" stroke="#ececec" stroke-width="1"/><line x1="703.9" x2="1035.2" y1="584.59" y2="584.59" stroke="#ececec" stroke-width="1"/><line x1="703.9" x2="1035.2" y1="580.48" y2="580.48" stroke="#ececec" stroke-width="1"/><line x1="703.9" x2="1035.2" y1="576.37" y2="576.37" stroke="#ececec" stroke-width="1"/><line x1="703.9" x2="1035.2" y1="572.26" y2="572.26" stroke="#ececec" stroke-width="1"/><line x1="703.9" x2="1035.2" y1="564.04" y2="564.04" stroke="#ececec" stroke-width="1"/><line x1="703.9" x2="1035.2" y1="559.93" y2="559.93" stroke="#ececec" stroke-width="1"/><line x1="703.9" x2="1035.2" y1="555.82" y2="555.82" stroke="#ececec" stroke-width="1"/><line x1="703.9" x2="1035.2" y1="551.71" y2="551.71" stroke="#ececec" stroke-width="1"/><line x1="703.9" x2="1035.2" y1="543.49" y2="543.49" stroke="#ececec" stroke-width="1"/><line x1="703.9" x2="1035.2" y1="539.38" y2="539.38" stroke="#ececec" stroke-width="1"/><line x1="703.9" x2="1035.2" y1="535.27" y2="535.27" stroke="#ececec" stroke-width="1"/><line x1="703.9" x2="1035.2" y1="531.16" y2="531.16" stroke="#ececec" stroke-width="1"/><line x1="703.9" x2="1035.2" y1="522.94" y2="522.94" stroke="#ececec" stroke-width="1"/><line x1="703.9" x2="1035.2" y1="518.83" y2="518.83" stroke="#ececec" stroke-width="1"/><line x1="703.9" x2="1035.2" y1="514.72" y2="514.72" stroke="#ececec" stroke-width="1"/><line x1="703.9" x2="1035.2" y1="510.61" y2="510.61" stroke="#ececec" stroke-width="1"/><line x1="703.9" x2="1035.2" y1="502.39" y2="502.39" stroke="#ececec" stroke-width="1"/><line x1="703.9" x2="1035.2" y1="498.28" y2="498.28" stroke="#ececec" stroke-width="1"/><line x1="703.9" x2="1035.2" y1="494.17" y2="494.17" stroke="#ececec" stroke-width="1"/><line x1="703.9" x2="1035.2" y1="490.06" y2="490.06" stroke="#ececec" stroke-width="1"/><line x1="703.9" x2="1035.2" y1="481.84" y2="481.84" stroke="#ececec" stroke-width="1"/><line x1="703.9" x2="1035.2" y1="477.73" y2="477.73" stroke="#ececec" stroke-width="1"/><line x1="703.9" x2="1035.2" y1="473.62" y2="473.62" stroke="#ececec" stroke-width="1"/><line x1="703.9" x2="1035.2" y1="469.51" y2="469.51" stroke="#ececec" stroke-width="1"/><line x1="703.9" x2="1035.2" y1="461.29" y2="461.29" stroke="#ececec" stroke-width="1"/><line x1="703.9" x2="1035.2" y1="457.18" y2="457.18" stroke="#ececec" stroke-width="1"/><line x1="703.9" x2="1035.2" y1="453.07" y2="453.07" stroke="#ececec" stroke-width="1"/><line x1="703.9" x2="1035.2" y1="448.96" y2="448.96" stroke="#ececec" stroke-width="1"/><line x1="703.9" x2="1035.2" y1="440.74" y2="440.74" stroke="#ececec" stroke-width="1"/><line x1="703.9" x2="1035.2" y1="436.63" y2="436.63" stroke="#ececec" stroke-width="1"/><line x1="703.9" x2="1035.2" y1="432.52" y2="432.52" stroke="#ececec" stroke-width="1"/><line x1="703.9" x2="1035.2" y1="428.41" y2="428.41" stroke="#ececec" stroke-width="1"/><line x1="703.9" x2="1035.2" y1="420.19" y2="420.19" stroke="#ececec" stroke-width="1"/><line x1="703.9" x2="1035.2" y1="416.08" y2="416.08" stroke="#ececec" stroke-width="1"/><line x1="703.9" x2="1035.2" y1="411.97" y2="411.97" stroke="#ececec" stroke-width="1"/><line x1="703.9" x2="1035.2" y1="407.86" y2="407.86" stroke="#ececec" stroke-width="1"/><line x1="703.9" x2="1035.2" y1="399.64" y2="399.64" stroke="#ececec" stroke-width="1"/><line x1="703.9" x2="1035.2" y1="395.53" y2="395.53" stroke="#ececec" stroke-width="1"/><line x1="703.9" x2="1035.2" y1="391.42" y2="391.42" stroke="#ececec" stroke-width="1"/><line x1="703.9" x2="1035.2" y1="387.31" y2="387.31" stroke="#ececec" stroke-width="1"/><line y1="384.0" y2="677.4" x1="727.00" x2="727.00" stroke="#ececec" stroke-width="1"/><line y1="384.0" y2="677.4" x1="742.90" x2="742.90" stroke="#ececec" stroke-width="1"/><line y1="384.0" y2="677.4" x1="758.80" x2="758.80" stroke="#ececec" stroke-width="1"/><line y1="384.0" y2="677.4" x1="790.60" x2="790.60" stroke="#ececec" stroke-width="1"/><line y1="384.0" y2="677.4" x1="806.50" x2="806.50" stroke="#ececec" stroke-width="1"/><line y1="384.0" y2="677.4" x1="822.40" x2="822.40" stroke="#ececec" stroke-width="1"/><line y1="384.0" y2="677.4" x1="854.20" x2="854.20" stroke="#ececec" stroke-width="1"/><line y1="384.0" y2="677.4" x1="870.10" x2="870.10" stroke="#ececec" stroke-width="1"/><line y1="384.0" y2="677.4" x1="886.00" x2="886.00" stroke="#ececec" stroke-width="1"/><line y1="384.0" y2="677.4" x1="917.80" x2="917.80" stroke="#ececec" stroke-width="1"/><line y1="384.0" y2="677.4" x1="933.70" x2="933.70" stroke="#ececec" stroke-width="1"/><line y1="384.0" y2="677.4" x1="949.60" x2="949.60" stroke="#ececec" stroke-width="1"/><line y1="384.0" y2="677.4" x1="981.40" x2="981.40" stroke="#ececec" stroke-width="1"/><line y1="384.0" y2="677.4" x1="997.30" x2="997.30" stroke="#ececec" stroke-width="1"/><line y1="384.0" y2="677.4" x1="1013.20" x2="1013.20" stroke="#ececec" stroke-width="1"/><line x1="703.9" x2="1035.2" y1="670.90" y2="670.90" stroke="#c4c4c4" stroke-width="1.1"/><text x="701.7" y="675.30" text-anchor="end" font-family="Liberation Sans, sans-serif" font-size="12" fill="#222">0,00</text><line x1="703.9" x2="1035.2" y1="650.35" y2="650.35" stroke="#c4c4c4" stroke-width="1.1"/><text x="701.7" y="654.75" text-anchor="end" font-family="Liberation Sans, sans-serif" font-size="12" fill="#222">0,05</text><line x1="703.9" x2="1035.2" y1="629.80" y2="629.80" stroke="#c4c4c4" stroke-width="1.1"/><text x="701.7" y="634.20" text-anchor="end" font-family="Liberation Sans, sans-serif" font-size="12" fill="#222">0,10</text><line x1="703.9" x2="1035.2" y1="609.25" y2="609.25" stroke="#c4c4c4" stroke-width="1.1"/><text x="701.7" y="613.65" text-anchor="end" font-family="Liberation Sans, sans-serif" font-size="12" fill="#222">0,15</text><line x1="703.9" x2="1035.2" y1="588.70" y2="588.70" stroke="#c4c4c4" stroke-width="1.1"/><text x="701.7" y="593.10" text-anchor="end" font-family="Liberation Sans, sans-serif" font-size="12" fill="#222">0,20</text><line x1="703.9" x2="1035.2" y1="568.15" y2="568.15" stroke="#c4c4c4" stroke-width="1.1"/><text x="701.7" y="572.55" text-anchor="end" font-family="Liberation Sans, sans-serif" font-size="12" fill="#222">0,25</text><line x1="703.9" x2="1035.2" y1="547.60" y2="547.60" stroke="#c4c4c4" stroke-width="1.1"/><text x="701.7" y="552.00" text-anchor="end" font-family="Liberation Sans, sans-serif" font-size="12" fill="#222">0,30</text><line x1="703.9" x2="1035.2" y1="527.05" y2="527.05" stroke="#c4c4c4" stroke-width="1.1"/><text x="701.7" y="531.45" text-anchor="end" font-family="Liberation Sans, sans-serif" font-size="12" fill="#222">0,35</text><line x1="703.9" x2="1035.2" y1="506.50" y2="506.50" stroke="#c4c4c4" stroke-width="1.1"/><text x="701.7" y="510.90" text-anchor="end" font-family="Liberation Sans, sans-serif" font-size="12" fill="#222">0,40</text><line x1="703.9" x2="1035.2" y1="485.95" y2="485.95" stroke="#c4c4c4" stroke-width="1.1"/><text x="701.7" y="490.35" text-anchor="end" font-family="Liberation Sans, sans-serif" font-size="12" fill="#222">0,45</text><line x1="703.9" x2="1035.2" y1="465.40" y2="465.40" stroke="#c4c4c4" stroke-width="1.1"/><text x="701.7" y="469.80" text-anchor="end" font-family="Liberation Sans, sans-serif" font-size="12" fill="#222">0,50</text><line x1="703.9" x2="1035.2" y1="444.85" y2="444.85" stroke="#c4c4c4" stroke-width="1.1"/><text x="701.7" y="449.25" text-anchor="end" font-family="Liberation Sans, sans-serif" font-size="12" fill="#222">0,55</text><line x1="703.9" x2="1035.2" y1="424.30" y2="424.30" stroke="#c4c4c4" stroke-width="1.1"/><text x="701.7" y="428.70" text-anchor="end" font-family="Liberation Sans, sans-serif" font-size="12" fill="#222">0,60</text><line x1="703.9" x2="1035.2" y1="403.75" y2="403.75" stroke="#c4c4c4" stroke-width="1.1"/><text x="701.7" y="408.15" text-anchor="end" font-family="Liberation Sans, sans-serif" font-size="12" fill="#222">0,65</text><line y1="384.0" y2="677.4" x1="711.10" x2="711.10" stroke="#c4c4c4" stroke-width="1.1"/><line y1="384.0" y2="677.4" x1="774.70" x2="774.70" stroke="#c4c4c4" stroke-width="1.1"/><line y1="384.0" y2="677.4" x1="838.30" x2="838.30" stroke="#c4c4c4" stroke-width="1.1"/><line y1="384.0" y2="677.4" x1="901.90" x2="901.90" stroke="#c4c4c4" stroke-width="1.1"/><line y1="384.0" y2="677.4" x1="965.50" x2="965.50" stroke="#c4c4c4" stroke-width="1.1"/><line y1="384.0" y2="677.4" x1="1029.10" x2="1029.10" stroke="#c4c4c4" stroke-width="1.1"/><rect x="703.9" y="384.0" width="331.30000000000007" height="293.4" fill="none" stroke="#222" stroke-width="1.2"/><line x1="703.9" x2="706.3" y1="670.90" y2="670.90" stroke="#555" stroke-width="0.7"/><line x1="703.9" x2="706.3" y1="666.79" y2="666.79" stroke="#555" stroke-width="0.7"/><line x1="703.9" x2="706.3" y1="662.68" y2="662.68" stroke="#555" stroke-width="0.7"/><line x1="703.9" x2="706.3" y1="658.57" y2="658.57" stroke="#555" stroke-width="0.7"/><line x1="703.9" x2="706.3" y1="654.46" y2="654.46" stroke="#555" stroke-width="0.7"/><line x1="703.9" x2="706.3" y1="650.35" y2="650.35" stroke="#555" stroke-width="0.7"/><line x1="703.9" x2="706.3" y1="646.24" y2="646.24" stroke="#555" stroke-width="0.7"/><line x1="703.9" x2="706.3" y1="642.13" y2="642.13" stroke="#555" stroke-width="0.7"/><line x1="703.9" x2="706.3" y1="638.02" y2="638.02" stroke="#555" stroke-width="0.7"/><line x1="703.9" x2="706.3" y1="633.91" y2="633.91" stroke="#555" stroke-width="0.7"/><line x1="703.9" x2="706.3" y1="629.80" y2="629.80" stroke="#555" stroke-width="0.7"/><line x1="703.9" x2="706.3" y1="625.69" y2="625.69" stroke="#555" stroke-width="0.7"/><line x1="703.9" x2="706.3" y1="621.58" y2="621.58" stroke="#555" stroke-width="0.7"/><line x1="703.9" x2="706.3" y1="617.47" y2="617.47" stroke="#555" stroke-width="0.7"/><line x1="703.9" x2="706.3" y1="613.36" y2="613.36" stroke="#555" stroke-width="0.7"/><line x1="703.9" x2="706.3" y1="609.25" y2="609.25" stroke="#555" stroke-width="0.7"/><line x1="703.9" x2="706.3" y1="605.14" y2="605.14" stroke="#555" stroke-width="0.7"/><line x1="703.9" x2="706.3" y1="601.03" y2="601.03" stroke="#555" stroke-width="0.7"/><line x1="703.9" x2="706.3" y1="596.92" y2="596.92" stroke="#555" stroke-width="0.7"/><line x1="703.9" x2="706.3" y1="592.81" y2="592.81" stroke="#555" stroke-width="0.7"/><line x1="703.9" x2="706.3" y1="588.70" y2="588.70" stroke="#555" stroke-width="0.7"/><line x1="703.9" x2="706.3" y1="584.59" y2="584.59" stroke="#555" stroke-width="0.7"/><line x1="703.9" x2="706.3" y1="580.48" y2="580.48" stroke="#555" stroke-width="0.7"/><line x1="703.9" x2="706.3" y1="576.37" y2="576.37" stroke="#555" stroke-width="0.7"/><line x1="703.9" x2="706.3" y1="572.26" y2="572.26" stroke="#555" stroke-width="0.7"/><line x1="703.9" x2="706.3" y1="568.15" y2="568.15" stroke="#555" stroke-width="0.7"/><line x1="703.9" x2="706.3" y1="564.04" y2="564.04" stroke="#555" stroke-width="0.7"/><line x1="703.9" x2="706.3" y1="559.93" y2="559.93" stroke="#555" stroke-width="0.7"/><line x1="703.9" x2="706.3" y1="555.82" y2="555.82" stroke="#555" stroke-width="0.7"/><line x1="703.9" x2="706.3" y1="551.71" y2="551.71" stroke="#555" stroke-width="0.7"/><line x1="703.9" x2="706.3" y1="547.60" y2="547.60" stroke="#555" stroke-width="0.7"/><line x1="703.9" x2="706.3" y1="543.49" y2="543.49" stroke="#555" stroke-width="0.7"/><line x1="703.9" x2="706.3" y1="539.38" y2="539.38" stroke="#555" stroke-width="0.7"/><line x1="703.9" x2="706.3" y1="535.27" y2="535.27" stroke="#555" stroke-width="0.7"/><line x1="703.9" x2="706.3" y1="531.16" y2="531.16" stroke="#555" stroke-width="0.7"/><line x1="703.9" x2="706.3" y1="527.05" y2="527.05" stroke="#555" stroke-width="0.7"/><line x1="703.9" x2="706.3" y1="522.94" y2="522.94" stroke="#555" stroke-width="0.7"/><line x1="703.9" x2="706.3" y1="518.83" y2="518.83" stroke="#555" stroke-width="0.7"/><line x1="703.9" x2="706.3" y1="514.72" y2="514.72" stroke="#555" stroke-width="0.7"/><line x1="703.9" x2="706.3" y1="510.61" y2="510.61" stroke="#555" stroke-width="0.7"/><line x1="703.9" x2="706.3" y1="506.50" y2="506.50" stroke="#555" stroke-width="0.7"/><line x1="703.9" x2="706.3" y1="502.39" y2="502.39" stroke="#555" stroke-width="0.7"/><line x1="703.9" x2="706.3" y1="498.28" y2="498.28" stroke="#555" stroke-width="0.7"/><line x1="703.9" x2="706.3" y1="494.17" y2="494.17" stroke="#555" stroke-width="0.7"/><line x1="703.9" x2="706.3" y1="490.06" y2="490.06" stroke="#555" stroke-width="0.7"/><line x1="703.9" x2="706.3" y1="485.95" y2="485.95" stroke="#555" stroke-width="0.7"/><line x1="703.9" x2="706.3" y1="481.84" y2="481.84" stroke="#555" stroke-width="0.7"/><line x1="703.9" x2="706.3" y1="477.73" y2="477.73" stroke="#555" stroke-width="0.7"/><line x1="703.9" x2="706.3" y1="473.62" y2="473.62" stroke="#555" stroke-width="0.7"/><line x1="703.9" x2="706.3" y1="469.51" y2="469.51" stroke="#555" stroke-width="0.7"/><line x1="703.9" x2="706.3" y1="465.40" y2="465.40" stroke="#555" stroke-width="0.7"/><line x1="703.9" x2="706.3" y1="461.29" y2="461.29" stroke="#555" stroke-width="0.7"/><line x1="703.9" x2="706.3" y1="457.18" y2="457.18" stroke="#555" stroke-width="0.7"/><line x1="703.9" x2="706.3" y1="453.07" y2="453.07" stroke="#555" stroke-width="0.7"/><line x1="703.9" x2="706.3" y1="448.96" y2="448.96" stroke="#555" stroke-width="0.7"/><line x1="703.9" x2="706.3" y1="444.85" y2="444.85" stroke="#555" stroke-width="0.7"/><line x1="703.9" x2="706.3" y1="440.74" y2="440.74" stroke="#555" stroke-width="0.7"/><line x1="703.9" x2="706.3" y1="436.63" y2="436.63" stroke="#555" stroke-width="0.7"/><line x1="703.9" x2="706.3" y1="432.52" y2="432.52" stroke="#555" stroke-width="0.7"/><line x1="703.9" x2="706.3" y1="428.41" y2="428.41" stroke="#555" stroke-width="0.7"/><line x1="703.9" x2="706.3" y1="424.30" y2="424.30" stroke="#555" stroke-width="0.7"/><line x1="703.9" x2="706.3" y1="420.19" y2="420.19" stroke="#555" stroke-width="0.7"/><line x1="703.9" x2="706.3" y1="416.08" y2="416.08" stroke="#555" stroke-width="0.7"/><line x1="703.9" x2="706.3" y1="411.97" y2="411.97" stroke="#555" stroke-width="0.7"/><line x1="703.9" x2="706.3" y1="407.86" y2="407.86" stroke="#555" stroke-width="0.7"/><line x1="703.9" x2="706.3" y1="403.75" y2="403.75" stroke="#555" stroke-width="0.7"/><line x1="703.9" x2="706.3" y1="399.64" y2="399.64" stroke="#555" stroke-width="0.7"/><line x1="703.9" x2="706.3" y1="395.53" y2="395.53" stroke="#555" stroke-width="0.7"/><line x1="703.9" x2="706.3" y1="391.42" y2="391.42" stroke="#555" stroke-width="0.7"/><line x1="703.9" x2="706.3" y1="387.31" y2="387.31" stroke="#555" stroke-width="0.7"/><rect x="707.02" y="650.35" width="8.15" height="27.05" fill="#20a03a" stroke="#0b2a10" stroke-width="0.9"/><rect x="715.18" y="645.42" width="8.15" height="31.98" fill="#20a03a" stroke="#0b2a10" stroke-width="0.9"/><rect x="723.33" y="648.29" width="8.15" height="29.11" fill="#20a03a" stroke="#0b2a10" stroke-width="0.9"/><rect x="731.48" y="637.40" width="8.15" height="40.00" fill="#20a03a" stroke="#0b2a10" stroke-width="0.9"/><rect x="739.64" y="615.41" width="8.15" height="61.99" fill="#20a03a" stroke="#0b2a10" stroke-width="0.9"/><rect x="747.79" y="598.98" width="8.15" height="78.42" fill="#20a03a" stroke="#0b2a10" stroke-width="0.9"/><rect x="755.95" y="585.41" width="8.15" height="91.99" fill="#20a03a" stroke="#0b2a10" stroke-width="0.9"/><rect x="764.10" y="571.44" width="8.15" height="105.96" fill="#20a03a" stroke="#0b2a10" stroke-width="0.9"/><rect x="772.25" y="559.93" width="8.15" height="117.47" fill="#20a03a" stroke="#0b2a10" stroke-width="0.9"/><rect x="780.41" y="574.31" width="8.15" height="103.09" fill="#20a03a" stroke="#0b2a10" stroke-width="0.9"/><rect x="788.56" y="583.77" width="8.15" height="93.63" fill="#20a03a" stroke="#0b2a10" stroke-width="0.9"/><rect x="796.72" y="593.63" width="8.15" height="83.77" fill="#20a03a" stroke="#0b2a10" stroke-width="0.9"/><rect x="804.87" y="605.14" width="8.15" height="72.26" fill="#20a03a" stroke="#0b2a10" stroke-width="0.9"/><rect x="813.02" y="602.26" width="8.15" height="75.14" fill="#20a03a" stroke="#0b2a10" stroke-width="0.9"/><rect x="821.18" y="598.98" width="8.15" height="78.42" fill="#20a03a" stroke="#0b2a10" stroke-width="0.9"/><rect x="829.33" y="597.33" width="8.15" height="80.07" fill="#20a03a" stroke="#0b2a10" stroke-width="0.9"/><rect x="837.48" y="594.45" width="8.15" height="82.95" fill="#20a03a" stroke="#0b2a10" stroke-width="0.9"/><rect x="845.64" y="570.41" width="8.15" height="106.99" fill="#20a03a" stroke="#0b2a10" stroke-width="0.9"/><rect x="853.79" y="532.80" width="8.15" height="144.60" fill="#20a03a" stroke="#0b2a10" stroke-width="0.9"/><rect x="861.95" y="508.97" width="8.15" height="168.43" fill="#20a03a" stroke="#0b2a10" stroke-width="0.9"/><rect x="870.10" y="469.51" width="8.15" height="207.89" fill="#20a03a" stroke="#0b2a10" stroke-width="0.9"/><rect x="878.25" y="434.99" width="8.15" height="242.41" fill="#20a03a" stroke="#0b2a10" stroke-width="0.9"/><rect x="886.41" y="398.82" width="8.15" height="278.58" fill="#20a03a" stroke="#0b2a10" stroke-width="0.9"/><rect x="894.56" y="392.24" width="8.15" height="285.16" fill="#20a03a" stroke="#0b2a10" stroke-width="0.9"/><rect x="902.72" y="417.31" width="8.15" height="260.09" fill="#20a03a" stroke="#0b2a10" stroke-width="0.9"/><rect x="910.87" y="444.03" width="8.15" height="233.37" fill="#20a03a" stroke="#0b2a10" stroke-width="0.9"/><rect x="919.02" y="492.94" width="8.15" height="184.46" fill="#20a03a" stroke="#0b2a10" stroke-width="0.9"/><rect x="927.18" y="578.01" width="8.15" height="99.39" fill="#20a03a" stroke="#0b2a10" stroke-width="0.9"/><rect x="935.33" y="636.38" width="8.15" height="41.02" fill="#20a03a" stroke="#0b2a10" stroke-width="0.9"/><rect x="943.48" y="664.90" width="8.15" height="12.50" fill="#20a03a" stroke="#0b2a10" stroke-width="0.9"/><rect x="951.64" y="670.90" width="8.15" height="6.50" fill="#20a03a" stroke="#0b2a10" stroke-width="0.9"/><rect x="959.79" y="670.90" width="8.15" height="6.50" fill="#20a03a" stroke="#0b2a10" stroke-width="0.9"/><rect x="967.95" y="670.90" width="8.15" height="6.50" fill="#20a03a" stroke="#0b2a10" stroke-width="0.9"/><rect x="976.10" y="670.90" width="8.15" height="6.50" fill="#20a03a" stroke="#0b2a10" stroke-width="0.9"/><rect x="984.25" y="670.90" width="8.15" height="6.50" fill="#20a03a" stroke="#0b2a10" stroke-width="0.9"/><rect x="992.41" y="670.90" width="8.15" height="6.50" fill="#20a03a" stroke="#0b2a10" stroke-width="0.9"/><rect x="1000.56" y="670.90" width="8.15" height="6.50" fill="#20a03a" stroke="#0b2a10" stroke-width="0.9"/><rect x="1008.72" y="670.90" width="8.15" height="6.50" fill="#20a03a" stroke="#0b2a10" stroke-width="0.9"/><rect x="1016.87" y="670.90" width="8.15" height="6.50" fill="#20a03a" stroke="#0b2a10" stroke-width="0.9"/><rect x="1025.02" y="670.90" width="8.15" height="6.50" fill="#20a03a" stroke="#0b2a10" stroke-width="0.9"/><text x="711.50" y="690" text-anchor="middle" font-family="Liberation Sans, sans-serif" font-size="12" fill="#222">0</text><text x="775.10" y="690" text-anchor="middle" font-family="Liberation Sans, sans-serif" font-size="12" fill="#222">20</text><text x="838.70" y="690" text-anchor="middle" font-family="Liberation Sans, sans-serif" font-size="12" fill="#222">40</text><text x="902.30" y="690" text-anchor="middle" font-family="Liberation Sans, sans-serif" font-size="12" fill="#222">60</text><text x="965.90" y="690" text-anchor="middle" font-family="Liberation Sans, sans-serif" font-size="12" fill="#222">80</text><svg x="1018" y="678" width="17.4" height="16" overflow="hidden"><text x="3.4" y="12" font-family="Liberation Sans, sans-serif" font-size="12" fill="#222">100</text></svg><text x="869" y="704.4" text-anchor="middle" font-family="Liberation Sans, sans-serif" font-size="12" fill="#222">Binding [%]</text><text transform="translate(672.2,584.4) rotate(-90)" font-family="Liberation Sans, sans-serif" font-size="11" fill="#222">Occur. [10<tspan font-size="8.5" dx="7.2" dy="-3.4">3</tspan><tspan dx="2.2" dy="3.4"> Events]</tspan></text></svg><svg class="ov" width="1193" height="711" viewBox="0 0 1193 711"><defs><filter id="bl" x="-20%" y="-20%" width="140%" height="140%"><feGaussianBlur stdDeviation="1.6"/></filter><filter id="bl2" x="-20%" y="-20%" width="140%" height="140%"><feGaussianBlur stdDeviation="0.7"/></filter><clipPath id="cpi"><rect x="300.6" y="39.9" width="132" height="131.5"/></clipPath><linearGradient id="cg" x1="0" x2="1" y1="0" y2="0"><stop offset="0" stop-color="#1fae16"/><stop offset="0.35" stop-color="#1aa013"/><stop offset="0.6" stop-color="#14800f"/><stop offset="1" stop-color="#0e600a"/></linearGradient></defs><g clip-path="url(#cpi)"><polygon points="315.0,108.9 321.1,106.6 328.8,103.5 335.6,99.3 343.3,97.3 353.9,100.8 363.5,103.9 375.1,110.8 384.7,116.4 394.3,120.9 405.9,124.3 415.5,126.6 423.2,127.8 417.5,129.5 407.8,131.8 394.3,133.6 378.9,134.3 363.5,134.0 353.9,132.2 346.2,128.6 335.6,129.5 330.8,125.1 326.9,118.9 321.1,114.7" fill="url(#cg)" filter="url(#bl)"/><g filter="url(#bl2)"><circle cx="341.7" cy="116.8" r="0.96" fill="#3cf028"/><circle cx="368.7" cy="118.2" r="0.51" fill="#4a1c10"/><circle cx="368.3" cy="128.0" r="0.70" fill="#2a3a12"/><circle cx="403.8" cy="127.5" r="0.74" fill="#20b818"/><circle cx="396.8" cy="129.7" r="0.70" fill="#14840e"/><circle cx="364.4" cy="120.0" r="0.71" fill="#125016"/><circle cx="375.6" cy="111.5" r="0.95" fill="#189a11"/><circle cx="392.6" cy="131.6" r="1.00" fill="#20b818"/><circle cx="348.1" cy="125.4" r="0.52" fill="#2ee61c"/><circle cx="337.0" cy="111.5" r="0.58" fill="#3cf028"/><circle cx="367.2" cy="115.8" r="0.93" fill="#0c400c"/><circle cx="345.5" cy="120.2" r="0.97" fill="#24d018"/><circle cx="364.5" cy="105.8" r="0.77" fill="#20b818"/><circle cx="385.0" cy="120.2" r="0.82" fill="#1cac14"/><circle cx="352.5" cy="109.4" r="0.80" fill="#3cf028"/><circle cx="346.4" cy="114.7" r="0.98" fill="#2ee61c"/><circle cx="316.8" cy="110.0" r="0.65" fill="#1cb814"/><circle cx="335.6" cy="125.0" r="0.65" fill="#3cf028"/><circle cx="357.6" cy="125.6" r="0.99" fill="#1c4a10"/><circle cx="371.7" cy="121.0" r="0.62" fill="#125016"/><circle cx="335.9" cy="112.6" r="0.55" fill="#2ee61c"/><circle cx="351.3" cy="108.7" r="0.72" fill="#24d018"/><circle cx="353.0" cy="120.9" r="0.73" fill="#4a1c10"/><circle cx="340.2" cy="100.5" r="0.66" fill="#24d018"/><circle cx="385.4" cy="118.5" r="0.65" fill="#14840e"/><circle cx="354.1" cy="111.9" r="0.78" fill="#1cb814"/><circle cx="318.5" cy="111.7" r="0.50" fill="#24d018"/><circle cx="339.8" cy="124.5" r="0.77" fill="#3cf028"/><circle cx="416.4" cy="129.0" r="0.56" fill="#20b818"/><circle cx="339.7" cy="100.5" r="0.59" fill="#2ee61c"/><circle cx="405.1" cy="131.3" r="0.91" fill="#189a11"/><circle cx="345.5" cy="106.2" r="0.53" fill="#1cb814"/><circle cx="351.4" cy="127.4" r="0.89" fill="#2ee61c"/><circle cx="322.6" cy="110.7" r="0.79" fill="#1cb814"/><circle cx="355.7" cy="103.2" r="0.71" fill="#3cf028"/><circle cx="397.3" cy="126.5" r="0.52" fill="#189a11"/><circle cx="367.2" cy="120.9" r="0.69" fill="#4a1c10"/><circle cx="363.9" cy="110.2" r="0.88" fill="#14840e"/><circle cx="339.4" cy="106.2" r="0.90" fill="#2ee61c"/><circle cx="340.1" cy="100.8" r="0.97" fill="#2ee61c"/><circle cx="357.3" cy="130.4" r="0.56" fill="#20b818"/><circle cx="393.5" cy="132.0" r="0.83" fill="#14840e"/><circle cx="391.6" cy="128.0" r="0.79" fill="#20b818"/><circle cx="400.2" cy="131.8" r="0.78" fill="#1cac14"/><circle cx="394.6" cy="132.1" r="0.68" fill="#20b818"/><circle cx="359.8" cy="109.3" r="0.98" fill="#14840e"/><circle cx="357.4" cy="104.9" r="0.92" fill="#14840e"/><circle cx="379.5" cy="118.1" r="0.58" fill="#14840e"/><circle cx="360.4" cy="130.0" r="0.55" fill="#189a11"/><circle cx="400.1" cy="131.1" r="0.79" fill="#14840e"/><circle cx="373.5" cy="131.8" r="0.84" fill="#20b818"/><circle cx="381.4" cy="133.7" r="0.65" fill="#189a11"/><circle cx="345.1" cy="126.8" r="0.59" fill="#24d018"/><circle cx="355.7" cy="108.2" r="0.71" fill="#24d018"/><circle cx="394.3" cy="122.8" r="0.73" fill="#189a11"/><circle cx="410.1" cy="127.5" r="0.74" fill="#1cac14"/><circle cx="397.0" cy="128.8" r="0.89" fill="#14840e"/><circle cx="388.7" cy="125.8" r="0.98" fill="#1cac14"/><circle cx="336.1" cy="105.8" r="0.81" fill="#24d018"/><circle cx="327.9" cy="106.0" r="0.52" fill="#3cf028"/><circle cx="366.2" cy="124.1" r="0.50" fill="#125016"/><circle cx="352.8" cy="112.6" r="0.54" fill="#1cb814"/><circle cx="388.2" cy="124.4" r="0.70" fill="#14840e"/><circle cx="345.9" cy="121.4" r="0.72" fill="#2ee61c"/><circle cx="374.9" cy="122.8" r="0.89" fill="#0c400c"/><circle cx="391.9" cy="121.0" r="0.55" fill="#20b818"/><circle cx="379.3" cy="116.1" r="0.75" fill="#14840e"/><circle cx="321.2" cy="107.1" r="0.82" fill="#24d018"/><circle cx="356.9" cy="131.3" r="0.56" fill="#14840e"/><circle cx="352.4" cy="123.6" r="0.71" fill="#4a1c10"/><circle cx="348.8" cy="103.0" r="0.66" fill="#1cb814"/><circle cx="396.4" cy="124.9" r="0.68" fill="#14840e"/><circle cx="344.9" cy="110.6" r="0.52" fill="#24d018"/><circle cx="352.5" cy="111.3" r="0.68" fill="#2ee61c"/><circle cx="345.4" cy="99.6" r="0.78" fill="#2ee61c"/><circle cx="384.1" cy="128.9" r="0.77" fill="#189a11"/><circle cx="333.9" cy="102.7" r="0.68" fill="#3cf028"/><circle cx="348.0" cy="128.3" r="0.95" fill="#1cb814"/><circle cx="377.7" cy="118.3" r="0.99" fill="#14840e"/><circle cx="383.3" cy="123.8" r="0.55" fill="#1cac14"/><circle cx="334.2" cy="119.9" r="0.60" fill="#24d018"/><circle cx="371.8" cy="120.7" r="0.56" fill="#2a3a12"/><circle cx="346.9" cy="121.1" r="0.57" fill="#24d018"/><circle cx="320.2" cy="109.7" r="0.75" fill="#24d018"/><circle cx="353.3" cy="108.5" r="0.85" fill="#3cf028"/><circle cx="383.3" cy="131.5" r="0.87" fill="#1cac14"/><circle cx="353.8" cy="126.9" r="0.93" fill="#1c4a10"/><circle cx="364.5" cy="125.0" r="0.66" fill="#2a3a12"/><circle cx="359.3" cy="114.0" r="0.77" fill="#1c4a10"/><circle cx="362.8" cy="120.8" r="0.51" fill="#125016"/><circle cx="366.8" cy="122.4" r="0.59" fill="#2a3a12"/><circle cx="356.4" cy="110.1" r="0.80" fill="#20b818"/><circle cx="338.3" cy="126.0" r="0.93" fill="#24d018"/><circle cx="372.1" cy="120.3" r="0.56" fill="#3a2a10"/><circle cx="333.7" cy="114.7" r="0.92" fill="#2ee61c"/><circle cx="360.6" cy="108.1" r="0.85" fill="#1cac14"/><circle cx="320.2" cy="111.3" r="0.75" fill="#1cb814"/><circle cx="342.1" cy="110.8" r="0.58" fill="#24d018"/><circle cx="343.0" cy="106.0" r="0.81" fill="#3cf028"/><circle cx="392.6" cy="133.2" r="0.55" fill="#1cac14"/><circle cx="372.0" cy="114.4" r="0.83" fill="#3a2a10"/><circle cx="406.5" cy="131.2" r="0.69" fill="#1cac14"/><circle cx="359.6" cy="132.3" r="0.92" fill="#189a11"/><circle cx="327.5" cy="110.8" r="0.77" fill="#3cf028"/><circle cx="410.4" cy="129.1" r="0.92" fill="#14840e"/><circle cx="377.8" cy="131.4" r="0.90" fill="#20b818"/><circle cx="364.6" cy="112.9" r="0.74" fill="#0c400c"/><circle cx="345.3" cy="102.3" r="0.97" fill="#1cb814"/><circle cx="400.6" cy="127.5" r="0.88" fill="#1cac14"/><circle cx="341.6" cy="128.3" r="0.94" fill="#2ee61c"/><circle cx="352.6" cy="110.1" r="0.60" fill="#2ee61c"/><circle cx="404.6" cy="131.1" r="0.78" fill="#20b818"/><circle cx="388.3" cy="118.4" r="0.56" fill="#1cac14"/><circle cx="347.3" cy="103.8" r="0.75" fill="#1cb814"/><circle cx="368.0" cy="119.8" r="0.91" fill="#1c4a10"/><circle cx="388.0" cy="125.1" r="0.70" fill="#20b818"/><circle cx="390.2" cy="125.8" r="0.92" fill="#20b818"/><circle cx="382.5" cy="127.2" r="0.56" fill="#189a11"/><circle cx="336.4" cy="124.8" r="0.71" fill="#3cf028"/><circle cx="388.7" cy="119.2" r="0.62" fill="#189a11"/><circle cx="341.4" cy="112.7" r="0.61" fill="#3cf028"/><circle cx="397.7" cy="129.5" r="0.97" fill="#14840e"/><circle cx="375.8" cy="111.9" r="0.95" fill="#189a11"/><circle cx="335.5" cy="99.5" r="0.65" fill="#24d018"/><circle cx="373.9" cy="120.4" r="0.60" fill="#1c4a10"/><circle cx="338.1" cy="114.8" r="0.67" fill="#2ee61c"/><circle cx="399.5" cy="124.6" r="0.57" fill="#20b818"/><circle cx="365.3" cy="130.8" r="0.54" fill="#14840e"/><circle cx="331.9" cy="125.2" r="0.99" fill="#3cf028"/><circle cx="357.1" cy="102.0" r="0.97" fill="#20b818"/><circle cx="357.2" cy="109.6" r="0.87" fill="#20b818"/><circle cx="356.0" cy="117.1" r="0.59" fill="#2a3a12"/><circle cx="350.1" cy="105.3" r="0.71" fill="#1cb814"/><circle cx="363.6" cy="120.0" r="0.58" fill="#0c400c"/><circle cx="367.1" cy="115.9" r="0.76" fill="#4a1c10"/><circle cx="356.9" cy="120.2" r="0.59" fill="#125016"/><circle cx="354.7" cy="113.3" r="0.73" fill="#3cf028"/><circle cx="350.5" cy="115.9" r="0.74" fill="#1cb814"/><circle cx="340.8" cy="113.5" r="0.52" fill="#3cf028"/><circle cx="380.2" cy="117.0" r="0.56" fill="#14840e"/><circle cx="404.4" cy="124.8" r="0.55" fill="#20b818"/><circle cx="373.4" cy="130.3" r="0.60" fill="#14840e"/><circle cx="358.3" cy="127.7" r="0.52" fill="#125016"/><circle cx="350.7" cy="119.3" r="0.64" fill="#4a1c10"/><circle cx="329.5" cy="105.4" r="0.75" fill="#2ee61c"/><circle cx="410.5" cy="129.7" r="0.99" fill="#20b818"/><circle cx="347.6" cy="117.4" r="0.62" fill="#24d018"/><circle cx="334.6" cy="103.1" r="0.94" fill="#24d018"/><circle cx="326.7" cy="110.8" r="0.64" fill="#2ee61c"/><circle cx="328.9" cy="109.4" r="0.97" fill="#2ee61c"/><circle cx="330.7" cy="114.2" r="0.68" fill="#2ee61c"/><circle cx="316.8" cy="109.1" r="0.78" fill="#1cb814"/><circle cx="367.6" cy="116.5" r="0.57" fill="#2a3a12"/><circle cx="366.7" cy="110.6" r="0.97" fill="#20b818"/><circle cx="333.6" cy="106.0" r="0.57" fill="#24d018"/><circle cx="328.4" cy="111.3" r="0.76" fill="#3cf028"/><circle cx="376.3" cy="112.8" r="0.80" fill="#189a11"/><circle cx="339.4" cy="113.4" r="0.82" fill="#3cf028"/><circle cx="382.1" cy="122.9" r="0.93" fill="#20b818"/><circle cx="328.5" cy="115.1" r="0.86" fill="#3cf028"/><circle cx="342.9" cy="112.6" r="0.73" fill="#3cf028"/><circle cx="369.2" cy="116.3" r="0.99" fill="#3a2a10"/><circle cx="375.0" cy="112.8" r="0.53" fill="#1cac14"/><circle cx="363.2" cy="128.5" r="0.53" fill="#125016"/><circle cx="339.0" cy="116.9" r="0.72" fill="#2ee61c"/><circle cx="355.8" cy="107.4" r="0.70" fill="#20b818"/><circle cx="357.1" cy="120.9" r="0.79" fill="#1c4a10"/><circle cx="331.1" cy="104.3" r="0.53" fill="#3cf028"/><circle cx="338.4" cy="112.6" r="0.51" fill="#24d018"/><circle cx="376.1" cy="131.3" r="0.87" fill="#14840e"/><circle cx="409.3" cy="128.1" r="0.72" fill="#189a11"/><circle cx="368.9" cy="130.1" r="0.78" fill="#20b818"/><circle cx="370.6" cy="133.8" r="0.64" fill="#14840e"/><circle cx="358.9" cy="115.5" r="0.79" fill="#2a3a12"/><circle cx="347.3" cy="120.5" r="0.53" fill="#2ee61c"/><circle cx="351.2" cy="128.6" r="0.74" fill="#3cf028"/><circle cx="362.8" cy="130.3" r="0.82" fill="#20b818"/><circle cx="351.4" cy="120.8" r="0.53" fill="#1c4a10"/><circle cx="373.8" cy="130.6" r="0.79" fill="#189a11"/><circle cx="368.1" cy="128.8" r="0.70" fill="#4a1c10"/><circle cx="353.8" cy="113.4" r="0.60" fill="#24d018"/><circle cx="329.6" cy="116.3" r="0.66" fill="#3cf028"/><circle cx="365.6" cy="123.6" r="0.81" fill="#125016"/><circle cx="371.0" cy="128.7" r="0.91" fill="#189a11"/><circle cx="338.7" cy="103.0" r="0.66" fill="#2ee61c"/><circle cx="392.4" cy="123.9" r="0.70" fill="#189a11"/><circle cx="359.0" cy="102.6" r="0.67" fill="#20b818"/><circle cx="349.2" cy="102.5" r="0.62" fill="#24d018"/><circle cx="334.5" cy="124.7" r="0.80" fill="#1cb814"/><circle cx="349.0" cy="110.2" r="0.89" fill="#2ee61c"/><circle cx="339.8" cy="127.3" r="0.67" fill="#1cb814"/><circle cx="334.9" cy="123.4" r="0.93" fill="#3cf028"/><circle cx="330.9" cy="108.2" r="0.76" fill="#3cf028"/><circle cx="376.2" cy="129.1" r="0.69" fill="#14840e"/><circle cx="319.2" cy="109.2" r="0.81" fill="#24d018"/><circle cx="394.9" cy="133.4" r="0.79" fill="#20b818"/><circle cx="351.5" cy="111.6" r="0.96" fill="#3cf028"/><circle cx="362.9" cy="117.3" r="0.71" fill="#125016"/><circle cx="356.8" cy="102.8" r="0.85" fill="#20b818"/><circle cx="326.9" cy="117.2" r="0.96" fill="#3cf028"/><circle cx="370.1" cy="116.7" r="0.60" fill="#2a3a12"/><circle cx="361.2" cy="118.0" r="0.86" fill="#1c4a10"/><circle cx="383.9" cy="122.8" r="0.75" fill="#189a11"/><circle cx="376.0" cy="131.4" r="0.70" fill="#20b818"/><circle cx="322.0" cy="106.5" r="0.62" fill="#3cf028"/><circle cx="344.3" cy="104.0" r="0.74" fill="#2ee61c"/><circle cx="364.1" cy="105.9" r="0.63" fill="#189a11"/><circle cx="403.8" cy="132.3" r="0.62" fill="#189a11"/><circle cx="344.0" cy="109.2" r="0.95" fill="#3cf028"/><circle cx="366.8" cy="133.4" r="0.91" fill="#20b818"/><circle cx="364.9" cy="112.3" r="0.84" fill="#4a1c10"/><circle cx="363.4" cy="126.8" r="0.65" fill="#125016"/><circle cx="343.8" cy="120.0" r="0.60" fill="#3cf028"/><circle cx="376.7" cy="121.6" r="0.87" fill="#4a1c10"/><circle cx="344.1" cy="99.1" r="0.94" fill="#2ee61c"/><circle cx="359.2" cy="113.4" r="0.81" fill="#0c400c"/><circle cx="344.6" cy="122.8" r="0.53" fill="#2ee61c"/><circle cx="397.6" cy="128.0" r="0.55" fill="#20b818"/><circle cx="340.1" cy="113.2" r="0.67" fill="#2ee61c"/><circle cx="340.7" cy="111.8" r="0.70" fill="#2ee61c"/><circle cx="325.4" cy="111.5" r="0.61" fill="#3cf028"/><circle cx="366.4" cy="115.5" r="0.88" fill="#0c400c"/><circle cx="383.3" cy="121.3" r="0.76" fill="#189a11"/><circle cx="363.3" cy="107.7" r="0.59" fill="#1cac14"/><circle cx="366.2" cy="116.2" r="0.96" fill="#125016"/><circle cx="381.1" cy="119.8" r="0.76" fill="#14840e"/><circle cx="349.7" cy="115.9" r="0.68" fill="#24d018"/><circle cx="371.6" cy="114.3" r="0.87" fill="#3a2a10"/><circle cx="353.9" cy="107.2" r="0.75" fill="#1cb814"/><circle cx="403.7" cy="126.7" r="0.81" fill="#20b818"/><circle cx="359.2" cy="113.7" r="0.97" fill="#4a1c10"/><circle cx="351.4" cy="114.3" r="0.89" fill="#3cf028"/><circle cx="325.5" cy="105.9" r="0.98" fill="#1cb814"/><circle cx="341.8" cy="118.3" r="0.62" fill="#1cb814"/><circle cx="335.2" cy="99.6" r="0.96" fill="#24d018"/><circle cx="366.2" cy="112.4" r="0.78" fill="#14840e"/><circle cx="353.4" cy="112.4" r="0.68" fill="#2ee61c"/><circle cx="360.4" cy="114.2" r="0.75" fill="#4a1c10"/><circle cx="359.7" cy="120.7" r="0.58" fill="#0c400c"/><circle cx="392.8" cy="132.9" r="0.99" fill="#1cac14"/><circle cx="382.6" cy="132.3" r="0.77" fill="#20b818"/><circle cx="329.1" cy="112.1" r="0.58" fill="#24d018"/><circle cx="371.4" cy="119.9" r="0.96" fill="#4a1c10"/><circle cx="346.7" cy="99.1" r="0.62" fill="#1cb814"/><circle cx="352.6" cy="107.5" r="0.92" fill="#24d018"/><circle cx="338.2" cy="123.9" r="0.75" fill="#2ee61c"/><circle cx="348.6" cy="128.1" r="0.88" fill="#24d018"/><circle cx="343.1" cy="103.7" r="0.67" fill="#24d018"/><circle cx="339.2" cy="103.5" r="0.73" fill="#2ee61c"/><circle cx="343.2" cy="116.4" r="0.63" fill="#1cb814"/><circle cx="350.0" cy="121.4" r="0.71" fill="#1c4a10"/><circle cx="405.5" cy="125.8" r="0.63" fill="#189a11"/><circle cx="328.6" cy="118.0" r="0.59" fill="#2ee61c"/><circle cx="351.1" cy="118.9" r="0.66" fill="#3a2a10"/><circle cx="327.4" cy="108.0" r="0.70" fill="#2ee61c"/><circle cx="352.7" cy="107.0" r="0.72" fill="#1cb814"/><circle cx="367.2" cy="114.0" r="0.68" fill="#0c400c"/><circle cx="369.3" cy="114.9" r="0.51" fill="#2a3a12"/><circle cx="322.9" cy="107.6" r="0.99" fill="#24d018"/><circle cx="334.4" cy="126.4" r="0.66" fill="#3cf028"/><circle cx="339.7" cy="108.6" r="0.99" fill="#2ee61c"/><circle cx="320.5" cy="110.4" r="0.82" fill="#2ee61c"/><circle cx="371.9" cy="109.2" r="0.90" fill="#14840e"/><circle cx="338.5" cy="123.4" r="0.56" fill="#2ee61c"/><circle cx="351.8" cy="113.0" r="0.88" fill="#3cf028"/><circle cx="336.4" cy="116.5" r="0.61" fill="#2ee61c"/><circle cx="374.2" cy="121.6" r="0.81" fill="#3a2a10"/><circle cx="352.6" cy="126.9" r="0.76" fill="#3a2a10"/><circle cx="352.9" cy="125.3" r="0.65" fill="#3a2a10"/><circle cx="360.8" cy="132.8" r="0.91" fill="#14840e"/><circle cx="399.7" cy="125.7" r="0.92" fill="#189a11"/><circle cx="393.6" cy="127.1" r="0.70" fill="#14840e"/><circle cx="396.3" cy="132.8" r="0.50" fill="#20b818"/><circle cx="334.8" cy="103.5" r="0.73" fill="#24d018"/><circle cx="390.0" cy="127.1" r="0.50" fill="#1cac14"/><circle cx="364.8" cy="114.6" r="0.96" fill="#1c4a10"/><circle cx="387.4" cy="126.0" r="0.81" fill="#189a11"/><circle cx="381.4" cy="114.9" r="0.67" fill="#14840e"/><circle cx="356.0" cy="116.5" r="0.91" fill="#125016"/><circle cx="334.9" cy="114.1" r="0.55" fill="#3cf028"/><circle cx="341.7" cy="123.2" r="0.51" fill="#2ee61c"/><circle cx="376.9" cy="122.0" r="0.57" fill="#20b818"/><circle cx="347.1" cy="105.4" r="0.79" fill="#3cf028"/><circle cx="331.5" cy="112.3" r="0.53" fill="#1cb814"/><circle cx="420.0" cy="128.2" r="0.99" fill="#1cac14"/><circle cx="345.0" cy="107.6" r="0.50" fill="#2ee61c"/><circle cx="343.0" cy="98.8" r="0.52" fill="#1cb814"/><circle cx="344.8" cy="110.0" r="0.95" fill="#1cb814"/><circle cx="354.3" cy="111.7" r="0.96" fill="#2ee61c"/><circle cx="372.6" cy="124.6" r="0.68" fill="#2a3a12"/><circle cx="355.1" cy="119.5" r="0.68" fill="#3a2a10"/><circle cx="332.4" cy="105.9" r="0.79" fill="#24d018"/><circle cx="368.7" cy="132.9" r="0.94" fill="#14840e"/><circle cx="338.0" cy="121.0" r="0.94" fill="#24d018"/><circle cx="388.5" cy="120.7" r="0.58" fill="#14840e"/><circle cx="383.4" cy="126.5" r="0.60" fill="#189a11"/><circle cx="339.1" cy="104.8" r="0.72" fill="#3cf028"/><circle cx="388.8" cy="124.8" r="0.76" fill="#1cac14"/><circle cx="355.3" cy="124.4" r="0.63" fill="#3a2a10"/><circle cx="368.6" cy="124.9" r="0.63" fill="#2a3a12"/><circle cx="341.9" cy="121.9" r="0.54" fill="#1cb814"/><circle cx="379.2" cy="114.6" r="0.78" fill="#1cac14"/><circle cx="359.3" cy="111.6" r="0.68" fill="#20b818"/><circle cx="376.8" cy="128.9" r="0.64" fill="#20b818"/><circle cx="392.3" cy="131.0" r="0.52" fill="#14840e"/><circle cx="331.3" cy="119.9" r="0.60" fill="#2ee61c"/><circle cx="333.8" cy="125.3" r="0.70" fill="#24d018"/><circle cx="326.3" cy="108.3" r="0.89" fill="#1cb814"/><circle cx="361.9" cy="104.4" r="0.54" fill="#1cac14"/><circle cx="391.6" cy="128.5" r="0.72" fill="#189a11"/><circle cx="324.4" cy="109.3" r="0.75" fill="#1cb814"/><circle cx="332.0" cy="104.9" r="0.64" fill="#1cb814"/><circle cx="415.0" cy="128.8" r="0.78" fill="#189a11"/><circle cx="343.0" cy="113.6" r="0.70" fill="#2ee61c"/><circle cx="390.2" cy="129.8" r="0.55" fill="#20b818"/><circle cx="368.1" cy="129.1" r="0.51" fill="#14840e"/><circle cx="358.6" cy="127.9" r="0.71" fill="#4a1c10"/><circle cx="408.3" cy="127.3" r="0.74" fill="#20b818"/><circle cx="346.6" cy="123.2" r="0.82" fill="#1cb814"/><circle cx="412.3" cy="127.5" r="0.53" fill="#14840e"/><circle cx="353.8" cy="128.3" r="0.60" fill="#3cf028"/><circle cx="380.8" cy="116.9" r="0.58" fill="#14840e"/><circle cx="343.8" cy="122.3" r="0.74" fill="#24d018"/><circle cx="342.7" cy="104.3" r="0.73" fill="#1cb814"/><circle cx="390.0" cy="130.8" r="0.58" fill="#189a11"/><circle cx="392.9" cy="121.3" r="0.62" fill="#1cac14"/><circle cx="372.4" cy="113.3" r="0.80" fill="#14840e"/><circle cx="360.0" cy="112.7" r="0.65" fill="#4a1c10"/><circle cx="360.8" cy="110.5" r="0.54" fill="#20b818"/><circle cx="350.6" cy="99.9" r="0.81" fill="#1cb814"/><circle cx="344.2" cy="113.7" r="1.00" fill="#2ee61c"/><circle cx="366.4" cy="117.8" r="0.93" fill="#4a1c10"/><circle cx="357.9" cy="114.9" r="0.72" fill="#0c400c"/><circle cx="347.8" cy="101.1" r="0.86" fill="#24d018"/><circle cx="319.2" cy="111.7" r="0.81" fill="#1cb814"/><circle cx="357.4" cy="131.6" r="0.58" fill="#1cac14"/><circle cx="334.8" cy="122.8" r="0.82" fill="#24d018"/><circle cx="327.3" cy="117.8" r="0.81" fill="#3cf028"/><circle cx="349.9" cy="120.5" r="0.92" fill="#0c400c"/><circle cx="346.4" cy="108.5" r="0.60" fill="#2ee61c"/><circle cx="351.4" cy="113.0" r="0.71" fill="#2ee61c"/><circle cx="368.9" cy="129.0" r="0.69" fill="#189a11"/><circle cx="410.3" cy="127.7" r="0.95" fill="#189a11"/><circle cx="353.6" cy="102.6" r="0.55" fill="#24d018"/><circle cx="349.3" cy="113.7" r="0.75" fill="#3cf028"/><circle cx="359.9" cy="103.2" r="0.95" fill="#1cac14"/><circle cx="334.0" cy="119.9" r="0.85" fill="#2ee61c"/><circle cx="346.6" cy="107.7" r="0.73" fill="#3cf028"/><circle cx="349.1" cy="125.8" r="0.78" fill="#1cb814"/><circle cx="353.1" cy="123.4" r="0.84" fill="#0c400c"/><circle cx="380.7" cy="114.4" r="0.65" fill="#14840e"/><circle cx="331.4" cy="108.6" r="0.50" fill="#3cf028"/><circle cx="341.3" cy="110.0" r="0.59" fill="#3cf028"/><circle cx="331.4" cy="115.9" r="0.80" fill="#3cf028"/><circle cx="373.5" cy="122.7" r="0.71" fill="#125016"/><circle cx="395.8" cy="126.3" r="0.93" fill="#189a11"/><circle cx="364.7" cy="128.9" r="0.60" fill="#125016"/><circle cx="360.2" cy="124.3" r="0.56" fill="#1c4a10"/><circle cx="363.3" cy="126.2" r="0.86" fill="#3a2a10"/><circle cx="332.8" cy="115.3" r="0.64" fill="#24d018"/><circle cx="385.8" cy="122.8" r="0.70" fill="#1cac14"/><circle cx="361.3" cy="122.3" r="0.88" fill="#4a1c10"/><circle cx="341.9" cy="108.4" r="0.76" fill="#3cf028"/><circle cx="378.6" cy="127.1" r="0.80" fill="#14840e"/><circle cx="388.5" cy="120.4" r="0.87" fill="#1cac14"/><circle cx="371.5" cy="122.2" r="0.98" fill="#3a2a10"/><circle cx="364.8" cy="110.2" r="0.51" fill="#1cac14"/><circle cx="365.4" cy="107.1" r="0.54" fill="#14840e"/><circle cx="363.6" cy="130.8" r="0.58" fill="#20b818"/><circle cx="341.9" cy="103.6" r="0.53" fill="#3cf028"/><circle cx="381.1" cy="123.5" r="0.64" fill="#14840e"/><circle cx="366.5" cy="120.3" r="0.92" fill="#1c4a10"/><circle cx="366.1" cy="108.0" r="0.92" fill="#20b818"/><circle cx="329.2" cy="119.5" r="0.78" fill="#24d018"/><circle cx="391.9" cy="121.0" r="0.65" fill="#14840e"/><circle cx="338.2" cy="116.8" r="0.68" fill="#3cf028"/><circle cx="413.0" cy="128.5" r="0.69" fill="#189a11"/><circle cx="355.9" cy="106.9" r="0.87" fill="#20b818"/><circle cx="362.4" cy="109.7" r="0.55" fill="#14840e"/><circle cx="364.8" cy="124.3" r="0.76" fill="#4a1c10"/><circle cx="355.3" cy="131.4" r="0.52" fill="#3cf028"/><circle cx="343.7" cy="127.6" r="0.52" fill="#2ee61c"/><circle cx="366.1" cy="113.6" r="0.87" fill="#0c400c"/><circle cx="341.0" cy="126.7" r="0.92" fill="#1cb814"/><circle cx="401.1" cy="132.1" r="0.93" fill="#189a11"/><circle cx="372.0" cy="126.2" r="0.56" fill="#3a2a10"/><circle cx="403.3" cy="131.6" r="0.87" fill="#20b818"/><circle cx="366.7" cy="121.1" r="0.75" fill="#3a2a10"/><circle cx="389.2" cy="122.8" r="0.62" fill="#20b818"/><circle cx="370.1" cy="130.1" r="1.00" fill="#1cac14"/><circle cx="399.7" cy="130.3" r="0.57" fill="#14840e"/><circle cx="358.6" cy="132.4" r="0.91" fill="#1cac14"/><circle cx="395.9" cy="125.2" r="0.67" fill="#14840e"/><circle cx="383.9" cy="120.0" r="0.64" fill="#20b818"/><circle cx="342.8" cy="99.5" r="0.93" fill="#3cf028"/><circle cx="395.8" cy="129.3" r="0.74" fill="#1cac14"/><circle cx="375.9" cy="112.9" r="0.91" fill="#1cac14"/><circle cx="352.5" cy="120.0" r="0.80" fill="#2a3a12"/><circle cx="330.2" cy="109.9" r="0.92" fill="#24d018"/><circle cx="372.9" cy="127.2" r="0.69" fill="#189a11"/><circle cx="382.3" cy="128.3" r="0.90" fill="#20b818"/><circle cx="349.2" cy="129.3" r="0.76" fill="#24d018"/><circle cx="401.2" cy="129.2" r="0.77" fill="#14840e"/><circle cx="327.6" cy="118.9" r="0.78" fill="#24d018"/><circle cx="370.8" cy="111.8" r="0.68" fill="#20b818"/><circle cx="398.4" cy="128.8" r="0.54" fill="#14840e"/><circle cx="337.0" cy="104.2" r="0.60" fill="#1cb814"/><circle cx="321.5" cy="108.1" r="0.76" fill="#24d018"/><circle cx="351.3" cy="109.7" r="0.93" fill="#1cb814"/><circle cx="364.5" cy="115.5" r="0.80" fill="#0c400c"/><circle cx="343.9" cy="124.5" r="0.75" fill="#1cb814"/><circle cx="345.6" cy="104.0" r="0.99" fill="#2ee61c"/><circle cx="376.7" cy="125.9" r="0.86" fill="#20b818"/><circle cx="370.8" cy="129.2" r="0.50" fill="#1cac14"/><circle cx="336.0" cy="120.9" r="0.68" fill="#1cb814"/><circle cx="347.4" cy="110.2" r="0.95" fill="#24d018"/><circle cx="344.6" cy="115.1" r="0.92" fill="#2ee61c"/><circle cx="319.5" cy="108.7" r="0.54" fill="#2ee61c"/><circle cx="383.9" cy="124.5" r="0.74" fill="#189a11"/><circle cx="337.3" cy="101.9" r="0.54" fill="#1cb814"/><circle cx="351.9" cy="128.2" r="0.91" fill="#3cf028"/><circle cx="361.0" cy="110.9" r="0.73" fill="#14840e"/><circle cx="345.2" cy="125.0" r="0.54" fill="#24d018"/><circle cx="330.4" cy="114.4" r="0.56" fill="#3cf028"/><circle cx="344.1" cy="98.8" r="0.65" fill="#1cb814"/><circle cx="353.5" cy="114.8" r="0.61" fill="#4a1c10"/><circle cx="357.0" cy="132.4" r="0.86" fill="#1cac14"/><circle cx="341.8" cy="119.7" r="0.96" fill="#24d018"/><circle cx="334.9" cy="107.5" r="0.73" fill="#24d018"/><circle cx="336.0" cy="123.6" r="0.78" fill="#3cf028"/><circle cx="352.9" cy="128.6" r="0.69" fill="#3cf028"/><circle cx="360.1" cy="127.0" r="0.59" fill="#1c4a10"/><circle cx="345.5" cy="119.9" r="0.59" fill="#2ee61c"/><circle cx="342.4" cy="121.5" r="0.73" fill="#1cb814"/><circle cx="377.6" cy="117.7" r="0.59" fill="#14840e"/><circle cx="375.5" cy="113.2" r="0.93" fill="#189a11"/><circle cx="346.2" cy="107.6" r="0.51" fill="#24d018"/><circle cx="337.1" cy="122.6" r="0.76" fill="#3cf028"/><circle cx="375.4" cy="130.2" r="0.69" fill="#14840e"/><circle cx="392.7" cy="124.0" r="0.70" fill="#14840e"/><circle cx="336.4" cy="125.0" r="0.68" fill="#24d018"/><circle cx="404.2" cy="130.4" r="0.56" fill="#1cac14"/><circle cx="353.6" cy="124.6" r="0.75" fill="#125016"/><circle cx="335.9" cy="100.6" r="0.68" fill="#1cb814"/><circle cx="379.1" cy="121.4" r="0.95" fill="#20b818"/><circle cx="353.5" cy="102.2" r="0.74" fill="#1cb814"/><circle cx="413.2" cy="129.9" r="0.77" fill="#14840e"/><circle cx="365.9" cy="125.4" r="0.53" fill="#4a1c10"/><circle cx="339.8" cy="107.0" r="0.65" fill="#24d018"/><circle cx="335.7" cy="118.9" r="0.90" fill="#3cf028"/><circle cx="355.6" cy="125.6" r="0.53" fill="#125016"/><circle cx="333.5" cy="127.2" r="0.86" fill="#3cf028"/><circle cx="399.9" cy="132.7" r="0.80" fill="#189a11"/><circle cx="387.3" cy="131.9" r="0.56" fill="#20b818"/><circle cx="347.7" cy="115.0" r="0.74" fill="#2ee61c"/><circle cx="343.9" cy="98.0" r="0.57" fill="#24d018"/><circle cx="329.9" cy="114.9" r="0.53" fill="#1cb814"/><circle cx="331.7" cy="118.1" r="0.54" fill="#1cb814"/><circle cx="363.7" cy="126.3" r="0.82" fill="#2a3a12"/><circle cx="343.0" cy="106.3" r="0.78" fill="#24d018"/><circle cx="315.6" cy="109.5" r="0.66" fill="#2ee61c"/><circle cx="357.4" cy="117.6" r="0.57" fill="#3a2a10"/><circle cx="378.6" cy="132.4" r="0.98" fill="#1cac14"/><circle cx="371.2" cy="123.6" r="0.57" fill="#2a3a12"/><circle cx="357.2" cy="121.9" r="0.81" fill="#1c4a10"/><circle cx="371.0" cy="125.9" r="0.80" fill="#4a1c10"/><circle cx="392.6" cy="121.6" r="0.85" fill="#189a11"/><circle cx="368.6" cy="118.5" r="0.84" fill="#0c400c"/><circle cx="379.2" cy="124.7" r="0.71" fill="#1cac14"/><circle cx="359.6" cy="113.2" r="0.97" fill="#4a1c10"/><circle cx="379.4" cy="114.8" r="0.84" fill="#1cac14"/><circle cx="356.2" cy="112.3" r="0.53" fill="#1cac14"/><circle cx="357.3" cy="123.1" r="0.57" fill="#2a3a12"/><circle cx="404.9" cy="128.3" r="0.93" fill="#189a11"/><circle cx="388.2" cy="128.4" r="0.75" fill="#20b818"/><circle cx="349.8" cy="112.0" r="0.57" fill="#3cf028"/><circle cx="387.4" cy="133.7" r="0.59" fill="#1cac14"/><circle cx="329.3" cy="103.9" r="0.75" fill="#2ee61c"/><circle cx="326.3" cy="112.9" r="0.68" fill="#2ee61c"/><circle cx="371.3" cy="112.6" r="0.71" fill="#189a11"/><circle cx="413.8" cy="128.4" r="0.87" fill="#20b818"/><circle cx="334.1" cy="112.0" r="0.68" fill="#2ee61c"/><circle cx="355.8" cy="127.3" r="0.86" fill="#1c4a10"/><circle cx="335.7" cy="102.0" r="0.56" fill="#1cb814"/><circle cx="359.4" cy="125.4" r="0.96" fill="#4a1c10"/><circle cx="356.3" cy="113.1" r="0.65" fill="#1c4a10"/><circle cx="375.9" cy="129.9" r="0.63" fill="#20b818"/><circle cx="353.6" cy="113.1" r="0.72" fill="#24d018"/><circle cx="325.2" cy="109.1" r="0.50" fill="#3cf028"/><circle cx="345.4" cy="104.1" r="0.66" fill="#2ee61c"/><circle cx="366.5" cy="126.8" r="0.88" fill="#0c400c"/><circle cx="376.9" cy="130.0" r="0.67" fill="#1cac14"/><circle cx="416.6" cy="127.1" r="0.99" fill="#189a11"/><circle cx="382.4" cy="122.4" r="0.77" fill="#1cac14"/><circle cx="365.6" cy="128.9" r="0.83" fill="#0c400c"/><circle cx="349.3" cy="122.2" r="0.60" fill="#0c400c"/><circle cx="359.8" cy="121.0" r="0.78" fill="#1c4a10"/><circle cx="368.7" cy="113.6" r="0.57" fill="#1c4a10"/><circle cx="378.2" cy="113.5" r="0.80" fill="#14840e"/><circle cx="355.7" cy="118.8" r="0.68" fill="#3a2a10"/><circle cx="338.8" cy="121.2" r="0.85" fill="#2ee61c"/><circle cx="324.8" cy="109.3" r="0.80" fill="#3cf028"/><circle cx="348.8" cy="112.5" r="0.92" fill="#24d018"/><circle cx="333.7" cy="126.2" r="0.92" fill="#3cf028"/><circle cx="363.8" cy="119.8" r="0.86" fill="#1c4a10"/><circle cx="364.5" cy="131.4" r="0.53" fill="#189a11"/><circle cx="331.5" cy="116.4" r="0.83" fill="#3cf028"/><circle cx="336.2" cy="117.1" r="0.95" fill="#2ee61c"/><circle cx="356.4" cy="102.9" r="0.96" fill="#14840e"/><circle cx="341.7" cy="111.6" r="0.50" fill="#2ee61c"/><circle cx="364.2" cy="127.2" r="0.99" fill="#125016"/><circle cx="337.0" cy="109.6" r="0.97" fill="#2ee61c"/><circle cx="414.0" cy="129.3" r="0.54" fill="#1cac14"/><circle cx="371.6" cy="120.6" r="0.56" fill="#125016"/><circle cx="323.3" cy="114.0" r="0.66" fill="#2ee61c"/><circle cx="353.9" cy="103.9" r="0.65" fill="#3cf028"/><circle cx="352.9" cy="115.3" r="0.85" fill="#4a1c10"/><circle cx="334.2" cy="111.8" r="0.69" fill="#2ee61c"/><circle cx="358.4" cy="108.3" r="0.99" fill="#20b818"/><circle cx="367.8" cy="131.4" r="0.91" fill="#20b818"/></g><circle cx="350.1" cy="96.5" r="0.55" fill="#128a10"/><circle cx="343.4" cy="95.7" r="0.55" fill="#128a10"/><circle cx="314.9" cy="105.4" r="0.55" fill="#128a10"/><circle cx="327.6" cy="96.6" r="0.55" fill="#128a10"/><circle cx="317.4" cy="103.9" r="0.55" fill="#128a10"/><circle cx="335.0" cy="99.1" r="0.55" fill="#128a10"/><circle cx="327.1" cy="101.1" r="0.55" fill="#128a10"/><circle cx="350.3" cy="99.0" r="0.55" fill="#128a10"/><circle cx="349.7" cy="96.6" r="0.55" fill="#128a10"/><circle cx="319.3" cy="102.3" r="0.55" fill="#128a10"/><circle cx="320.3" cy="105.4" r="0.55" fill="#128a10"/><circle cx="313.7" cy="102.3" r="0.55" fill="#128a10"/><circle cx="337.6" cy="96.1" r="0.55" fill="#128a10"/><circle cx="335.6" cy="95.1" r="0.55" fill="#128a10"/><circle cx="355.5" cy="99.6" r="0.55" fill="#128a10"/><circle cx="331.5" cy="101.2" r="0.55" fill="#128a10"/><circle cx="348.2" cy="98.8" r="0.55" fill="#128a10"/><circle cx="325.8" cy="100.7" r="0.55" fill="#128a10"/><circle cx="354.3" cy="100.4" r="0.55" fill="#128a10"/><circle cx="337.2" cy="95.0" r="0.55" fill="#128a10"/><circle cx="328.4" cy="99.5" r="0.55" fill="#128a10"/><circle cx="346.2" cy="94.8" r="0.55" fill="#128a10"/><circle cx="328.2" cy="103.5" r="0.55" fill="#128a10"/><circle cx="326.7" cy="101.2" r="0.55" fill="#128a10"/></g><text x="339.2" y="154.2" text-anchor="middle" font-family="Liberation Sans, sans-serif" font-size="10" font-weight="bold" fill="#fff">100 µm</text><rect x="313.4" y="157.9" width="51.1" height="2" fill="#f4f4f4"/></svg><div class="" style="left:1047.60px;top:14.00px;width:142.60px;height:85.00px;border:1.5px solid #747874;box-sizing:border-box;"></div><div class="" style="left:1048.60px;top:15.00px;width:140.60px;height:83.00px;border:1px solid #b4b9b2;box-sizing:border-box;"></div><div class="lbl" style="left:1054.40px;top:7.40px;width:44.60px;height:12.00px;background:#dfe8dd;line-height:12px;padding-left:1.4px;">E{_FRET}</div><div class="t" style="left:1052.80px;top:27.45px;">Min:</div><div class="inp" style="left:1083.00px;top:25.50px;width:86.80px;height:18.40px;line-height:16.4px;padding-right:1.7px;">0,0 %</div><div class="sb" style="left:1169.80px;top:25.50px;width:14.60px;height:8.80px;"></div><div class="sb" style="left:1169.80px;top:35.10px;width:14.60px;height:8.80px;"></div><div class="t" style="left:1052.80px;top:50.95px;">Max:</div><div class="inp" style="left:1083.00px;top:49.10px;width:86.80px;height:18.40px;line-height:16.4px;padding-right:1.7px;">100,0 %</div><div class="sb" style="left:1169.80px;top:49.10px;width:14.60px;height:8.80px;"></div><div class="sb" style="left:1169.80px;top:58.70px;width:14.60px;height:8.80px;"></div><div class="t" style="left:1052.80px;top:73.85px;">Smpl. Pts.:</div><div class="inp" style="left:1113.00px;top:72.20px;width:56.80px;height:18.50px;line-height:16.5px;padding-right:13.4px;">40</div><div class="sb" style="left:1169.80px;top:72.20px;width:14.60px;height:8.85px;"></div><div class="sb" style="left:1169.80px;top:81.85px;width:14.60px;height:8.85px;"></div><div class="" style="left:1047.60px;top:371.70px;width:142.60px;height:85.00px;border:1.5px solid #747874;box-sizing:border-box;"></div><div class="" style="left:1048.60px;top:372.70px;width:140.60px;height:83.00px;border:1px solid #b4b9b2;box-sizing:border-box;"></div><div class="lbl" style="left:1054.40px;top:365.10px;width:34.60px;height:12.00px;background:#dfe8dd;line-height:12px;padding-left:1.4px;">Binding</div><div class="t" style="left:1052.80px;top:385.15px;">Min:</div><div class="inp" style="left:1083.00px;top:383.20px;width:86.80px;height:18.40px;line-height:16.4px;padding-right:1.7px;">0,0 %</div><div class="sb" style="left:1169.80px;top:383.20px;width:14.60px;height:8.80px;"></div><div class="sb" style="left:1169.80px;top:392.80px;width:14.60px;height:8.80px;"></div><div class="t" style="left:1052.80px;top:408.65px;">Max:</div><div class="inp" style="left:1083.00px;top:406.80px;width:86.80px;height:18.40px;line-height:16.4px;padding-right:1.7px;">100,0 %</div><div class="sb" style="left:1169.80px;top:406.80px;width:14.60px;height:8.80px;"></div><div class="sb" style="left:1169.80px;top:416.40px;width:14.60px;height:8.80px;"></div><div class="t" style="left:1052.80px;top:431.55px;">Smpl. Pts.:</div><div class="inp" style="left:1113.00px;top:429.90px;width:56.80px;height:18.50px;line-height:16.5px;padding-right:13.4px;">40</div><div class="sb" style="left:1169.80px;top:429.90px;width:14.60px;height:8.85px;"></div><div class="sb" style="left:1169.80px;top:439.55px;width:14.60px;height:8.85px;"></div><div class="btn" style="left:1048.10px;top:253.70px;width:141.20px;height:19.20px;line-height:18.20px;"><i></i><span>Recalculate Histogram</span></div><div class="btn" style="left:1048.10px;top:277.00px;width:141.20px;height:19.20px;line-height:18.20px;"><i></i><span>Optimize View</span></div><div class="btn" style="left:1048.10px;top:300.30px;width:141.20px;height:19.20px;line-height:18.20px;"><i></i><span>Autoscale Histogram</span></div><div class="btn" style="left:1048.10px;top:323.50px;width:141.20px;height:19.20px;line-height:18.20px;"><i></i><span>Show All Events</span></div><div class="btn" style="left:1048.10px;top:610.10px;width:141.20px;height:19.20px;line-height:18.20px;"><i></i><span>Recalculate Histogram</span></div><div class="btn" style="left:1048.10px;top:633.20px;width:141.20px;height:19.20px;line-height:18.20px;"><i></i><span>Optimize View</span></div><div class="btn" style="left:1048.10px;top:656.50px;width:141.20px;height:19.20px;line-height:18.20px;"><i></i><span>Autoscale Histogram</span></div><div class="btn" style="left:1048.10px;top:679.60px;width:141.20px;height:19.20px;line-height:18.20px;"><i></i><span>Show All Events</span></div><svg class="ov" width="1193" height="711" viewBox="0 0 1193 711"><polygon points="11.5,14.950000000000001 16.1,14.950000000000001 13.8,12.35" fill="#000"/><path d="M21.45,34.55 L23.150000000000002,36.55 L26.650000000000002,32.55" stroke="#000" stroke-width="1.7" fill="none"/><polygon points="91.15,55.14999999999999 97.35,55.14999999999999 94.25,51.75" fill="#000"/><polygon points="91.15,61.650000000000006 97.35,61.650000000000006 94.25,65.05" fill="#000"/><polygon points="11.5,105.14999999999999 16.1,105.14999999999999 13.8,107.75" fill="#000"/><polygon points="11.5,129.95000000000002 16.1,129.95000000000002 13.8,127.35000000000001" fill="#000"/><polygon points="109.1,146.20000000000002 115.29999999999998,146.20000000000002 112.19999999999999,142.79999999999998" fill="#000"/><polygon points="109.1,152.39999999999998 115.29999999999998,152.39999999999998 112.19999999999999,155.8" fill="#000"/><polygon points="269.3,148.2 275.50000000000006,148.2 272.40000000000003,151.60000000000002" fill="#000"/><polyline points="8.0,192.7 31.0,192.7 32.2,186.0 33.5,181.5 35.5,179.0 38.0,178.4 45.0,178.7 45.0,178.7 48.9,179.5 52.8,180.2 56.6,180.9 60.5,181.6 64.4,182.2 68.3,182.8 72.2,183.3 76.1,183.9 79.9,184.4 83.8,184.8 87.7,185.3 91.6,185.7 95.5,186.1 99.3,186.5 103.2,186.8 107.1,187.2 111.0,187.5 114.9,187.8 118.7,188.1 122.6,188.3 126.5,188.6 130.4,188.8 134.3,189.1 138.2,189.3 142.0,189.5 145.9,189.7 149.8,189.9 153.7,190.0 157.6,190.2 161.4,190.4 165.3,190.5 169.2,190.6 173.1,190.8 177.0,190.9 180.8,191.0 184.7,191.1 188.6,191.2 192.5,191.3 196.4,191.4 200.3,191.5 204.1,191.6 208.0,191.7 211.9,191.7 215.8,191.8 219.7,191.9 223.5,191.9 227.4,192.0 231.3,192.1 235.2,192.1 239.1,192.2 242.9,192.2 246.8,192.2 250.7,192.3 254.6,192.3 258.5,192.4 262.4,192.4 266.2,192.4 270.1,192.5 274.0,192.5" fill="none" stroke="#0a0a0a" stroke-width="1"/><rect x="7.2" y="176" width="1.3" height="31.4" fill="#e01010"/><rect x="273.6" y="176" width="1.3" height="31.4" fill="#e01010"/><rect x="7" y="183.2" width="2.6" height="1.6" fill="#e01010"/><rect x="272.6" y="183.2" width="2.6" height="1.6" fill="#e01010"/><rect x="7" y="191.89999999999998" width="2.6" height="1.6" fill="#e01010"/><rect x="272.6" y="191.89999999999998" width="2.6" height="1.6" fill="#e01010"/><rect x="7" y="199.2" width="2.6" height="1.6" fill="#e01010"/><rect x="272.6" y="199.2" width="2.6" height="1.6" fill="#e01010"/><path d="M266.8,180.3 L268.6,182.6 L271.8,178.6" stroke="#000" stroke-width="1.7" fill="none"/><path d="M67.60000000000001,225.5 L69.3,227.5 L72.8,223.5" stroke="#000" stroke-width="1.7" fill="none"/><polygon points="11.5,265.95 16.1,265.95 13.8,263.35" fill="#000"/><polygon points="224.50000000000003,369.6 230.70000000000002,369.6 227.60000000000002,373.00000000000006" fill="#000"/><polygon points="224.50000000000003,392.6 230.70000000000002,392.6 227.60000000000002,396.00000000000006" fill="#000"/><polygon points="224.50000000000003,415.6 230.70000000000002,415.6 227.60000000000002,419.00000000000006" fill="#000"/><g transform="translate(118.6,481.6)" fill="none" stroke="#111" stroke-width="0.8"><circle r="6.3"/><ellipse rx="3.1" ry="6.3"/><line x1="0" y1="-6.3" x2="0" y2="6.3"/><line x1="-6.3" y1="0" x2="6.3" y2="0"/><path d="M-5.2,-3.4 H5.2 M-5.2,3.4 H5.2"/></g><path d="M268.59999999999997,481.71000000000004 L270.59999999999997,484.11 L274.4,479.51000000000005" stroke="#000" stroke-width="1.8" fill="none"/><polygon points="253.05,496.82 257.85,496.82 255.45000000000002,494.12" fill="#000"/><polygon points="253.05,502.44000000000005 257.85,502.44000000000005 255.45000000000002,505.14000000000004" fill="#000"/><polygon points="253.05,514.8400000000001 257.85,514.8400000000001 255.45000000000002,512.1400000000001" fill="#000"/><polygon points="253.05,520.46 257.85,520.46 255.45000000000002,523.1600000000001" fill="#000"/><path d="M268.59999999999997,517.75 L270.59999999999997,520.1500000000001 L274.4,515.5500000000001" stroke="#000" stroke-width="1.8" fill="none"/><polygon points="253.05,532.8600000000001 257.85,532.8600000000001 255.45000000000002,530.1600000000001" fill="#000"/><polygon points="253.05,538.48 257.85,538.48 255.45000000000002,541.1800000000001" fill="#000"/><polygon points="253.05,550.8800000000001 257.85,550.8800000000001 255.45000000000002,548.1800000000001" fill="#000"/><polygon points="253.05,556.5 257.85,556.5 255.45000000000002,559.2" fill="#000"/><path d="M268.59999999999997,553.79 L270.59999999999997,556.19 L274.4,551.59" stroke="#000" stroke-width="1.8" fill="none"/><polygon points="253.05,568.9000000000001 257.85,568.9000000000001 255.45000000000002,566.2" fill="#000"/><polygon points="253.05,574.52 257.85,574.52 255.45000000000002,577.22" fill="#000"/><path d="M268.59999999999997,571.81 L270.59999999999997,574.21 L274.4,569.61" stroke="#000" stroke-width="1.8" fill="none"/><polygon points="253.05,586.9200000000001 257.85,586.9200000000001 255.45000000000002,584.22" fill="#000"/><polygon points="253.05,592.54 257.85,592.54 255.45000000000002,595.24" fill="#000"/><polygon points="253.05,604.94 257.85,604.94 255.45000000000002,602.24" fill="#000"/><polygon points="253.05,610.56 257.85,610.56 255.45000000000002,613.26" fill="#000"/><polygon points="253.05,622.96 257.85,622.96 255.45000000000002,620.26" fill="#000"/><polygon points="253.05,628.5799999999999 257.85,628.5799999999999 255.45000000000002,631.28" fill="#000"/><polygon points="285.4,481.25 290.4,481.25 287.9,478.45" fill="#000"/><polygon points="285.4,668.75 290.4,668.75 287.9,671.55" fill="#000"/><polygon points="11.85,682.7 11.85,687.7 9.049999999999999,685.2" fill="#000"/><polygon points="271.35,682.7 271.35,687.7 274.15000000000003,685.2" fill="#000"/><polygon points="436.1,139.5 436.1,144.3 438.8,141.9" fill="#000"/><polygon points="436.1,150.76 436.1,155.56 438.8,153.16" fill="#000"/><polygon points="436.1,162.02 436.1,166.82000000000002 438.8,164.42000000000002" fill="#000"/><polygon points="436.1,173.28 436.1,178.08 438.8,175.68" fill="#000"/><polygon points="436.1,184.54 436.1,189.34 438.8,186.94" fill="#000"/><polygon points="436.1,195.79999999999998 436.1,200.6 438.8,198.2" fill="#000"/><polygon points="436.1,207.06 436.1,211.86 438.8,209.46" fill="#000"/><polygon points="436.1,218.32 436.1,223.12 438.8,220.72" fill="#000"/><polygon points="436.1,229.58 436.1,234.38000000000002 438.8,231.98000000000002" fill="#000"/><polygon points="436.1,240.84 436.1,245.64000000000001 438.8,243.24" fill="#000"/><polygon points="436.1,252.1 436.1,256.9 438.8,254.5" fill="#000"/><polygon points="573.4999999999999,48.5 579.6999999999999,48.5 576.5999999999999,51.89999999999999" fill="#000"/><path d="M591.2499999999999,49.65 L592.9499999999999,51.65 L596.4499999999999,47.65" stroke="#000" stroke-width="1.7" fill="none"/><polygon points="477.7,84.9 477.7,65.6 478.6,65.6 479.6,76 481,79.6 486,80.4 500,81 510,81.4 520,80.9 530,81.2 540,80.6 550,80.9 560,81.4 570,81.8 580,82.3 592,83.0 600,84 606,84.9" fill="#fff"/><rect x="610.6" y="65.4" width="1" height="19.6" fill="#111"/><polygon points="527.9,93.375 534.1,93.375 531.0,89.97500000000001" fill="#000"/><polygon points="527.9,99.525 534.1,99.525 531.0,102.925" fill="#000"/><polygon points="636.0,93.375 642.2,93.375 639.1,89.97500000000001" fill="#000"/><polygon points="636.0,99.525 642.2,99.525 639.1,102.925" fill="#000"/><polygon points="573.4999999999999,118.25 579.6999999999999,118.25 576.5999999999999,121.64999999999999" fill="#000"/><path d="M591.2499999999999,119.35000000000001 L592.9499999999999,121.35000000000001 L596.4499999999999,117.35000000000001" stroke="#000" stroke-width="1.7" fill="none"/><polygon points="443.9,154.9 443.9,154.5 444.0,154.3 445.5,154.5 447.0,153.9 448.5,154.6 450.0,154.0 451.5,154.2 453.0,154.6 454.5,154.0 456.0,154.7 457.5,154.1 459.0,154.6 460.5,154.6 462.0,154.1 463.5,153.6 465.0,154.5 466.5,154.4 468.0,153.9 469.5,153.5 471.0,153.9 472.5,154.2 474.0,153.4 475.5,154.6 477.6,154.5 477.6,135.4 478.4,135.4 479.4,150.0 481.0,154.2 486.0,154.4 490.0,154.0 493.0,153.4 496.0,153.8 500.0,153.2 504.0,153.4 508.0,152.6 512.0,152.8 516.0,151.8 520.0,152.0 524.0,151.4 528.0,151.2 534.0,150.0 540.0,148.4 545.0,145.4 549.0,141.0 552.0,137.6 553.6,136.2 555.4,137.6 558.0,141.0 562.0,145.4 567.0,148.2 574.0,150.4 582.0,151.6 586.0,152.4 590.0,152.0 594.0,152.8 598.0,152.6 606.0,153.0 610.4,153.2 610.4,154.9" fill="#fff" stroke="#222" stroke-width="0.5"/><rect x="610.4" y="135.2" width="1" height="19.6" fill="#111"/><rect x="477.1" y="135.2" width="0.8" height="19.6" fill="#222"/><path d="M446.15,165.95000000000002 L447.85,167.95000000000002 L451.35,163.95000000000002" stroke="#000" stroke-width="1.7" fill="none"/><polygon points="527.9,163.05 534.1,163.05 531.0,159.64999999999998" fill="#000"/><polygon points="527.9,169.35 534.1,169.35 531.0,172.75000000000003" fill="#000"/><path d="M547.7499999999999,165.95000000000002 L549.4499999999999,167.95000000000002 L552.9499999999999,163.95000000000002" stroke="#000" stroke-width="1.7" fill="none"/><polygon points="636.0,163.05 642.2,163.05 639.1,159.64999999999998" fill="#000"/><polygon points="636.0,169.35 642.2,169.35 639.1,172.75000000000003" fill="#000"/><path d="M306.15,370.65 L307.85,372.65 L311.35,368.65" stroke="#000" stroke-width="1.7" fill="none"/><polygon points="502.0,391.35 508.20000000000005,391.35 505.1,387.95" fill="#000"/><polygon points="502.0,397.65 508.20000000000005,397.65 505.1,401.05" fill="#000"/><polygon points="499.7,416.65 504.7,416.65 502.2,413.84999999999997" fill="#000"/><polygon points="499.7,692.35 504.7,692.35 502.2,695.15" fill="#000"/><polygon points="305.85,706.1 305.85,711.1 303.05,708.6" fill="#000"/><polygon points="485.35,706.1 485.35,711.1 488.15000000000003,708.6" fill="#000"/><polygon points="1174.0,31.650000000000002 1180.1999999999998,31.650000000000002 1177.1,28.25" fill="#000"/><polygon points="1174.0,37.75 1180.1999999999998,37.75 1177.1,41.14999999999999" fill="#000"/><polygon points="1174.0,55.25 1180.1999999999998,55.25 1177.1,51.85000000000001" fill="#000"/><polygon points="1174.0,61.35 1180.1999999999998,61.35 1177.1,64.75" fill="#000"/><polygon points="1174.0,78.375 1180.1999999999998,78.375 1177.1,74.97500000000001" fill="#000"/><polygon points="1174.0,84.525 1180.1999999999998,84.525 1177.1,87.925" fill="#000"/><polygon points="1174.0,389.34999999999997 1180.1999999999998,389.34999999999997 1177.1,385.94999999999993" fill="#000"/><polygon points="1174.0,395.45 1180.1999999999998,395.45 1177.1,398.85" fill="#000"/><polygon points="1174.0,412.95 1180.1999999999998,412.95 1177.1,409.54999999999995" fill="#000"/><polygon points="1174.0,419.05 1180.1999999999998,419.05 1177.1,422.45000000000005" fill="#000"/><polygon points="1174.0,436.075 1180.1999999999998,436.075 1177.1,432.67499999999995" fill="#000"/><polygon points="1174.0,442.22499999999997 1180.1999999999998,442.22499999999997 1177.1,445.625" fill="#000"/></svg></div></body></html>
